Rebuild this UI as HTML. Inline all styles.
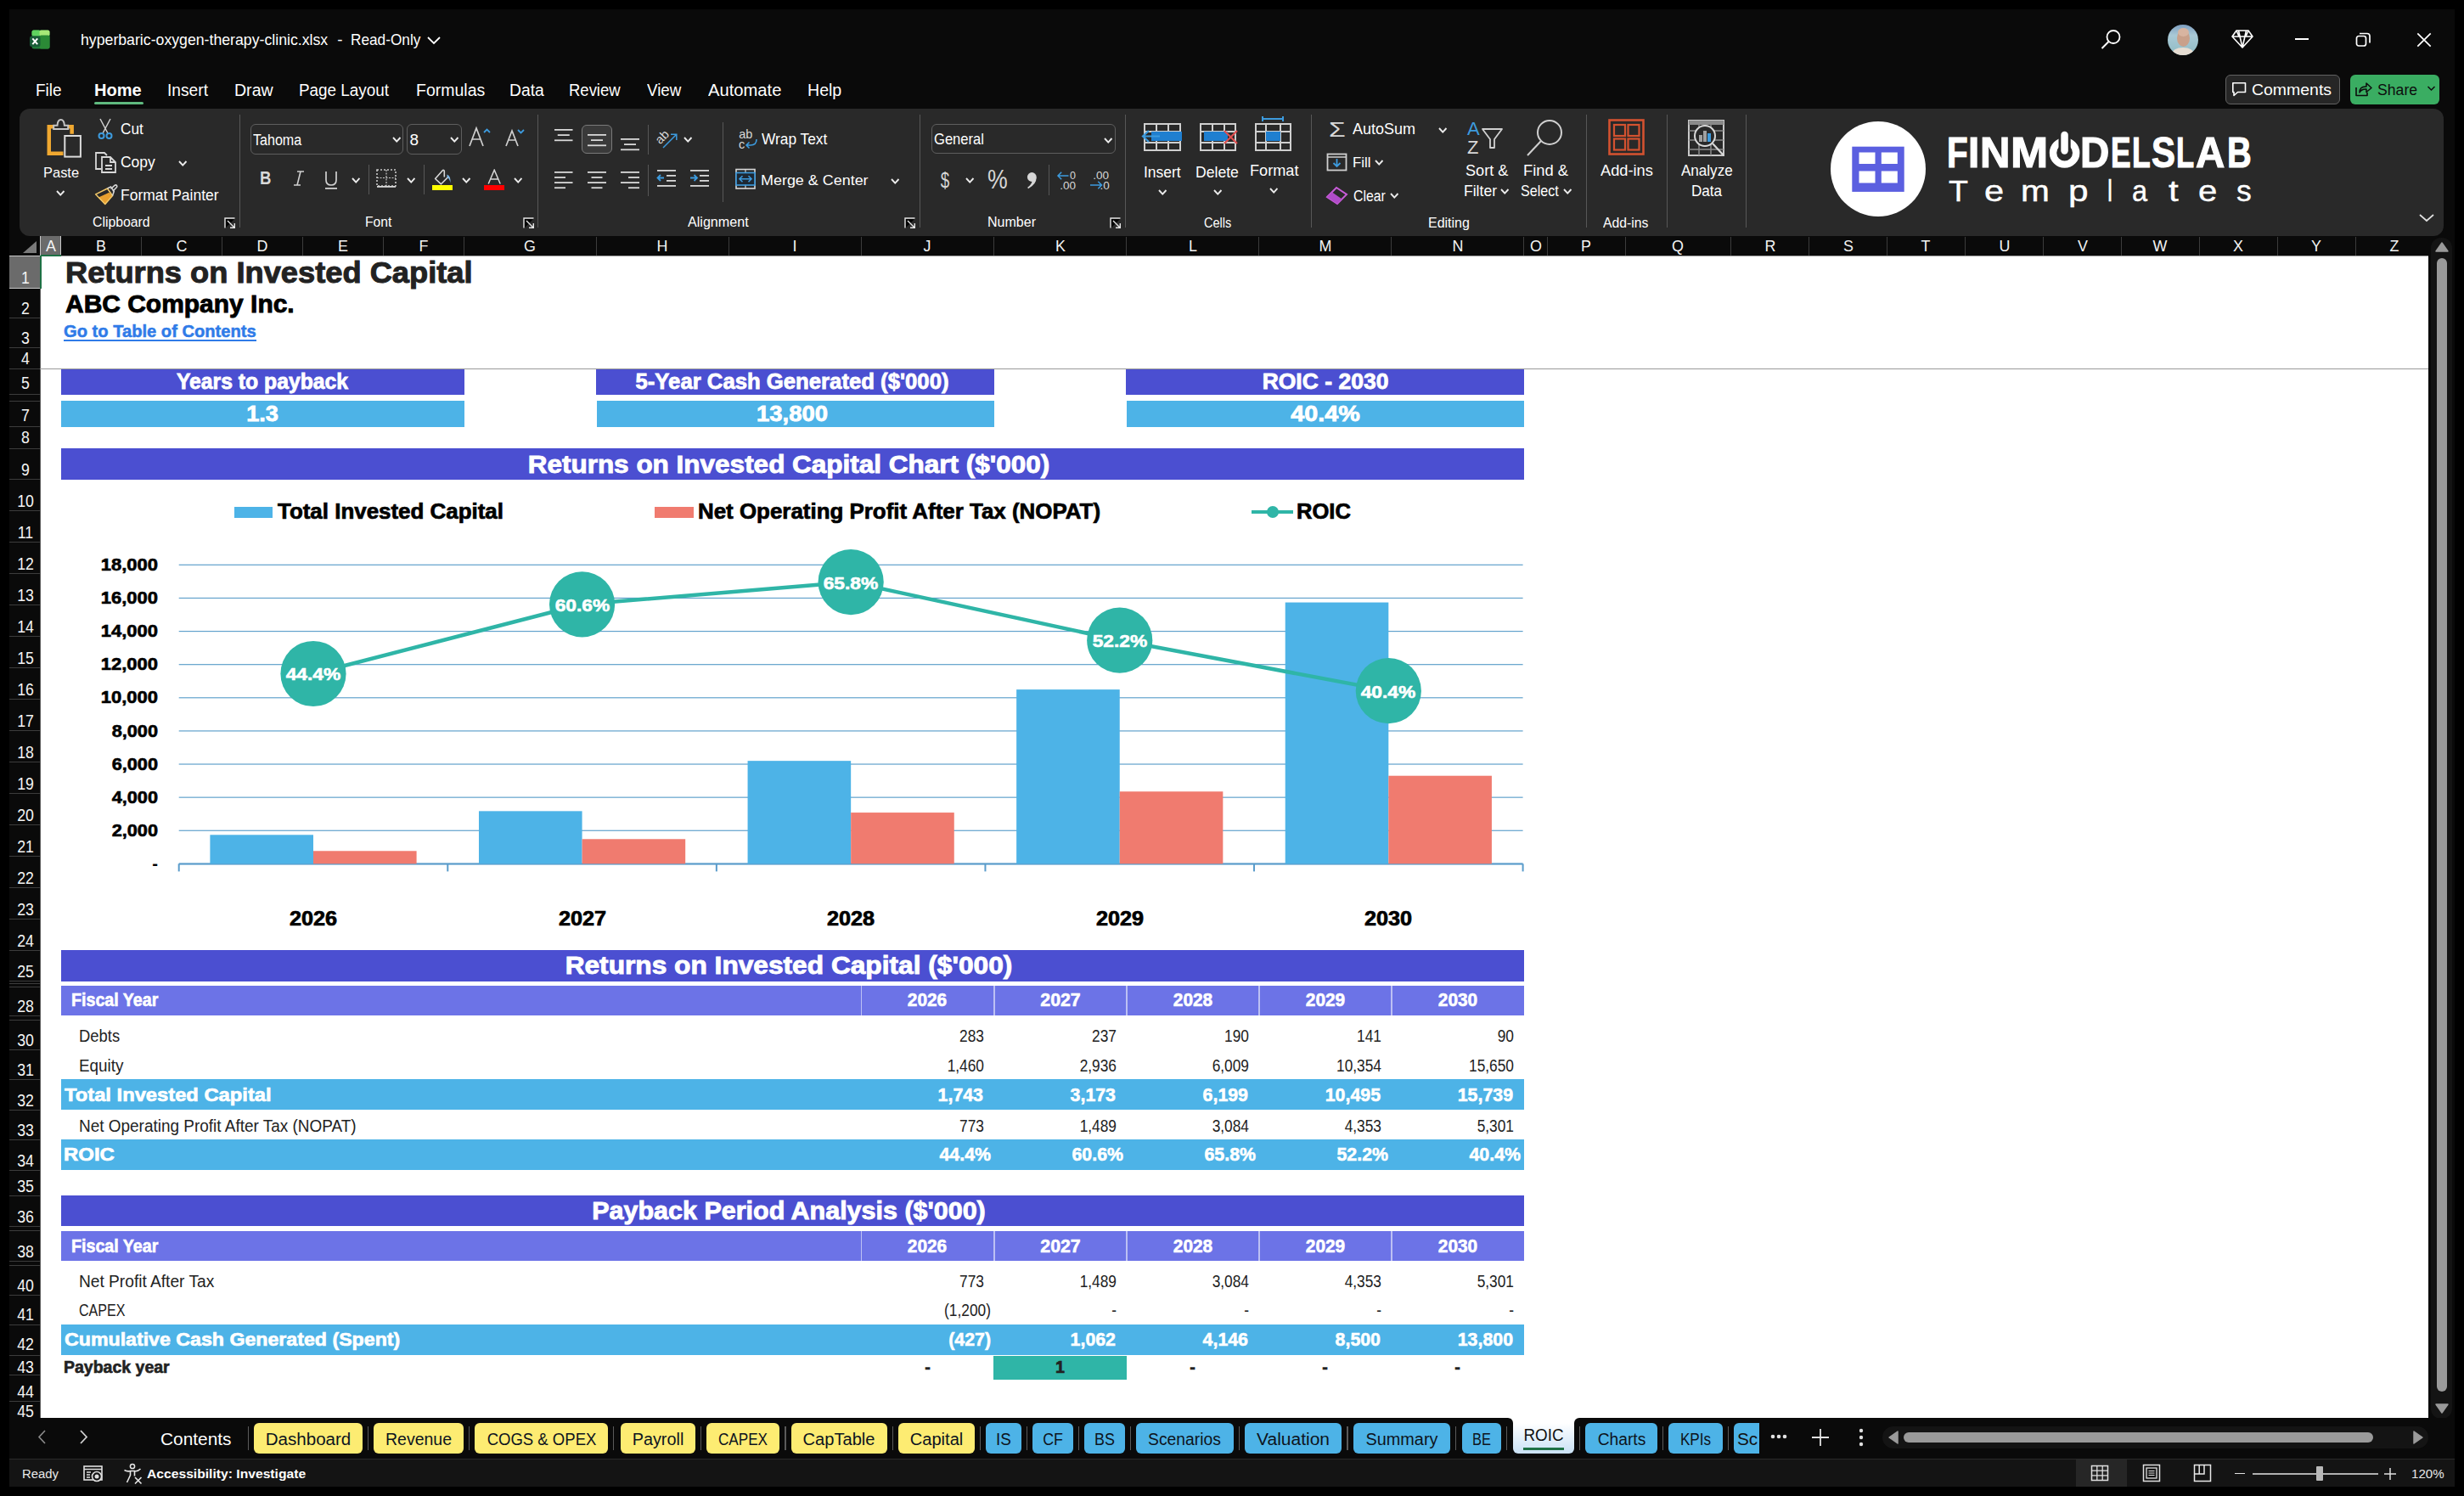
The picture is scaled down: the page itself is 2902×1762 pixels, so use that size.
<!DOCTYPE html><html><head><meta charset="utf-8"><style>
html,body{margin:0;padding:0;width:2902px;height:1762px;overflow:hidden;background:#000;font-family:"Liberation Sans",sans-serif}
</style></head><body>
<div style="position:absolute;left:11px;top:11px;width:2880px;height:1740px;background:#0a0a0a;border-radius:0px;"></div>
<div style="position:absolute;left:47px;top:301px;width:2813px;height:1369px;background:#ffffff;border-radius:0px;"></div>
<div style="position:absolute;left:11px;top:278px;width:2849px;height:23px;background:#0a0a0a;border-radius:0px;"></div>
<svg style="position:absolute;left:22px;top:283px;" width="22" height="16" viewBox="0 0 22 16"><polygon points="21,1 21,15 5,15" fill="#7a7a7a"/></svg>
<div style="position:absolute;left:47.5px;top:278px;width:24.5px;height:23px;background:#6b6b6b;border-radius:0px;"></div>
<div style="position:absolute;left:71.3px;top:279px;width:1.0px;height:22px;background:#3c3c3c;border-radius:0px;"></div>
<div style="position:absolute;left:165.9px;top:279px;width:1.0px;height:22px;background:#3c3c3c;border-radius:0px;"></div>
<div style="position:absolute;left:261.1px;top:279px;width:1.0px;height:22px;background:#3c3c3c;border-radius:0px;"></div>
<div style="position:absolute;left:355.7px;top:279px;width:1.0px;height:22px;background:#3c3c3c;border-radius:0px;"></div>
<div style="position:absolute;left:450.9px;top:279px;width:1.0px;height:22px;background:#3c3c3c;border-radius:0px;"></div>
<div style="position:absolute;left:546.0px;top:279px;width:1.0px;height:22px;background:#3c3c3c;border-radius:0px;"></div>
<div style="position:absolute;left:701.9px;top:279px;width:1.0px;height:22px;background:#3c3c3c;border-radius:0px;"></div>
<div style="position:absolute;left:857.8px;top:279px;width:1.0px;height:22px;background:#3c3c3c;border-radius:0px;"></div>
<div style="position:absolute;left:1013.9px;top:279px;width:1.0px;height:22px;background:#3c3c3c;border-radius:0px;"></div>
<div style="position:absolute;left:1170.0px;top:279px;width:1.0px;height:22px;background:#3c3c3c;border-radius:0px;"></div>
<div style="position:absolute;left:1326.0px;top:279px;width:1.0px;height:22px;background:#3c3c3c;border-radius:0px;"></div>
<div style="position:absolute;left:1482.0px;top:279px;width:1.0px;height:22px;background:#3c3c3c;border-radius:0px;"></div>
<div style="position:absolute;left:1638.1px;top:279px;width:1.0px;height:22px;background:#3c3c3c;border-radius:0px;"></div>
<div style="position:absolute;left:1794.1px;top:279px;width:1.0px;height:22px;background:#3c3c3c;border-radius:0px;"></div>
<div style="position:absolute;left:1821.9px;top:279px;width:1.0px;height:22px;background:#3c3c3c;border-radius:0px;"></div>
<div style="position:absolute;left:1913.7px;top:279px;width:1.0px;height:22px;background:#3c3c3c;border-radius:0px;"></div>
<div style="position:absolute;left:2037.9px;top:279px;width:1.0px;height:22px;background:#3c3c3c;border-radius:0px;"></div>
<div style="position:absolute;left:2130.1px;top:279px;width:1.0px;height:22px;background:#3c3c3c;border-radius:0px;"></div>
<div style="position:absolute;left:2221.9px;top:279px;width:1.0px;height:22px;background:#3c3c3c;border-radius:0px;"></div>
<div style="position:absolute;left:2314.0px;top:279px;width:1.0px;height:22px;background:#3c3c3c;border-radius:0px;"></div>
<div style="position:absolute;left:2406.0px;top:279px;width:1.0px;height:22px;background:#3c3c3c;border-radius:0px;"></div>
<div style="position:absolute;left:2498.1px;top:279px;width:1.0px;height:22px;background:#3c3c3c;border-radius:0px;"></div>
<div style="position:absolute;left:2589.8px;top:279px;width:1.0px;height:22px;background:#3c3c3c;border-radius:0px;"></div>
<div style="position:absolute;left:2681.8px;top:279px;width:1.0px;height:22px;background:#3c3c3c;border-radius:0px;"></div>
<div style="position:absolute;left:2773.9px;top:279px;width:1.0px;height:22px;background:#3c3c3c;border-radius:0px;"></div>
<div style="position:absolute;left:47px;top:300.5px;width:2813px;height:1.0px;background:#9a9a9a;border-radius:0px;"></div>
<div style="position:absolute;left:11px;top:301px;width:36px;height:1369px;background:#0a0a0a;border-radius:0px;"></div>
<div style="position:absolute;left:11px;top:301px;width:36px;height:38.19999999999999px;background:#6b6b6b;border-radius:0px;"></div>
<div style="position:absolute;left:11px;top:338.7px;width:36px;height:1.0px;background:#3c3c3c;border-radius:0px;"></div>
<div style="position:absolute;left:11px;top:374.0px;width:36px;height:1.0px;background:#3c3c3c;border-radius:0px;"></div>
<div style="position:absolute;left:11px;top:409.0px;width:36px;height:1.0px;background:#3c3c3c;border-radius:0px;"></div>
<div style="position:absolute;left:11px;top:433.9px;width:36px;height:1.0px;background:#3c3c3c;border-radius:0px;"></div>
<div style="position:absolute;left:11px;top:464.0px;width:36px;height:1.0px;background:#3c3c3c;border-radius:0px;"></div>
<div style="position:absolute;left:11px;top:471.9px;width:36px;height:1.0px;background:#3c3c3c;border-radius:0px;"></div>
<div style="position:absolute;left:11px;top:502.0px;width:36px;height:1.0px;background:#3c3c3c;border-radius:0px;"></div>
<div style="position:absolute;left:11px;top:528.0px;width:36px;height:1.0px;background:#3c3c3c;border-radius:0px;"></div>
<div style="position:absolute;left:11px;top:563.8px;width:36px;height:1.0px;background:#3c3c3c;border-radius:0px;"></div>
<div style="position:absolute;left:11px;top:600.8px;width:36px;height:1.0px;background:#3c3c3c;border-radius:0px;"></div>
<div style="position:absolute;left:11px;top:637.8px;width:36px;height:1.0px;background:#3c3c3c;border-radius:0px;"></div>
<div style="position:absolute;left:11px;top:674.8px;width:36px;height:1.0px;background:#3c3c3c;border-radius:0px;"></div>
<div style="position:absolute;left:11px;top:711.8px;width:36px;height:1.0px;background:#3c3c3c;border-radius:0px;"></div>
<div style="position:absolute;left:11px;top:748.8px;width:36px;height:1.0px;background:#3c3c3c;border-radius:0px;"></div>
<div style="position:absolute;left:11px;top:785.8px;width:36px;height:1.0px;background:#3c3c3c;border-radius:0px;"></div>
<div style="position:absolute;left:11px;top:822.8px;width:36px;height:1.0px;background:#3c3c3c;border-radius:0px;"></div>
<div style="position:absolute;left:11px;top:859.8px;width:36px;height:1.0px;background:#3c3c3c;border-radius:0px;"></div>
<div style="position:absolute;left:11px;top:896.8px;width:36px;height:1.0px;background:#3c3c3c;border-radius:0px;"></div>
<div style="position:absolute;left:11px;top:933.8px;width:36px;height:1.0px;background:#3c3c3c;border-radius:0px;"></div>
<div style="position:absolute;left:11px;top:970.8px;width:36px;height:1.0px;background:#3c3c3c;border-radius:0px;"></div>
<div style="position:absolute;left:11px;top:1007.8px;width:36px;height:1.0px;background:#3c3c3c;border-radius:0px;"></div>
<div style="position:absolute;left:11px;top:1044.8px;width:36px;height:1.0px;background:#3c3c3c;border-radius:0px;"></div>
<div style="position:absolute;left:11px;top:1081.7px;width:36px;height:1.0px;background:#3c3c3c;border-radius:0px;"></div>
<div style="position:absolute;left:11px;top:1118.6px;width:36px;height:1.0px;background:#3c3c3c;border-radius:0px;"></div>
<div style="position:absolute;left:11px;top:1155.2px;width:36px;height:1.0px;background:#3c3c3c;border-radius:0px;"></div>
<div style="position:absolute;left:11px;top:1157.7px;width:36px;height:1.0px;background:#3c3c3c;border-radius:0px;"></div>
<div style="position:absolute;left:11px;top:1162.0px;width:36px;height:1.0px;background:#3c3c3c;border-radius:0px;"></div>
<div style="position:absolute;left:11px;top:1195.7px;width:36px;height:1.0px;background:#3c3c3c;border-radius:0px;"></div>
<div style="position:absolute;left:11px;top:1200.7px;width:36px;height:1.0px;background:#3c3c3c;border-radius:0px;"></div>
<div style="position:absolute;left:11px;top:1236.2px;width:36px;height:1.0px;background:#3c3c3c;border-radius:0px;"></div>
<div style="position:absolute;left:11px;top:1271.1px;width:36px;height:1.0px;background:#3c3c3c;border-radius:0px;"></div>
<div style="position:absolute;left:11px;top:1307.0px;width:36px;height:1.0px;background:#3c3c3c;border-radius:0px;"></div>
<div style="position:absolute;left:11px;top:1342.1px;width:36px;height:1.0px;background:#3c3c3c;border-radius:0px;"></div>
<div style="position:absolute;left:11px;top:1377.6px;width:36px;height:1.0px;background:#3c3c3c;border-radius:0px;"></div>
<div style="position:absolute;left:11px;top:1408.0px;width:36px;height:1.0px;background:#3c3c3c;border-radius:0px;"></div>
<div style="position:absolute;left:11px;top:1443.7px;width:36px;height:1.0px;background:#3c3c3c;border-radius:0px;"></div>
<div style="position:absolute;left:11px;top:1448.6px;width:36px;height:1.0px;background:#3c3c3c;border-radius:0px;"></div>
<div style="position:absolute;left:11px;top:1485.0px;width:36px;height:1.0px;background:#3c3c3c;border-radius:0px;"></div>
<div style="position:absolute;left:11px;top:1489.7px;width:36px;height:1.0px;background:#3c3c3c;border-radius:0px;"></div>
<div style="position:absolute;left:11px;top:1525.2px;width:36px;height:1.0px;background:#3c3c3c;border-radius:0px;"></div>
<div style="position:absolute;left:11px;top:1559.9px;width:36px;height:1.0px;background:#3c3c3c;border-radius:0px;"></div>
<div style="position:absolute;left:11px;top:1595.6px;width:36px;height:1.0px;background:#3c3c3c;border-radius:0px;"></div>
<div style="position:absolute;left:11px;top:1618.7px;width:36px;height:1.0px;background:#3c3c3c;border-radius:0px;"></div>
<div style="position:absolute;left:11px;top:1649.7px;width:36px;height:1.0px;background:#3c3c3c;border-radius:0px;"></div>
<div style="position:absolute;left:11px;top:1669.9px;width:36px;height:1.0px;background:#3c3c3c;border-radius:0px;"></div>
<div style="position:absolute;left:46.5px;top:301px;width:1.0px;height:1369px;background:#5a5a5a;border-radius:0px;"></div>
<div style="position:absolute;left:11px;top:300.5px;width:36px;height:1.0px;background:#c8c8c8;border-radius:0px;"></div>
<div style="position:absolute;left:11px;top:338.7px;width:36px;height:1.0px;background:#c8c8c8;border-radius:0px;"></div>
<div style="position:absolute;left:47px;top:278px;width:1px;height:23px;background:#c8c8c8;border-radius:0px;"></div>
<div style="position:absolute;left:71.3px;top:278px;width:1.0px;height:23px;background:#c8c8c8;border-radius:0px;"></div>
<div style="position:absolute;left:47px;top:301px;width:2px;height:38.5px;background:#1e7145;border-radius:0px;"></div>
<div style="position:absolute;left:47.5px;top:299.5px;width:24.5px;height:2.0px;background:#1e7145;border-radius:0px;"></div>
<div style="position:absolute;left:47px;top:433.8px;width:2813px;height:1.0px;background:#9a9a9a;border-radius:0px;"></div>
<div style="position:absolute;left:75.2px;top:400px;width:226.5px;height:2px;background:#2f7be8;border-radius:0px;"></div>
<div style="position:absolute;left:71.5px;top:434.8px;width:475.29999999999995px;height:29.80000000000001px;background:#4b4fd1;border-radius:0px;"></div>
<div style="position:absolute;left:72.0px;top:472.3px;width:474.79999999999995px;height:30.30000000000001px;background:#4db3e7;border-radius:0px;"></div>
<div style="position:absolute;left:702.2px;top:434.8px;width:468.79999999999995px;height:29.80000000000001px;background:#4b4fd1;border-radius:0px;"></div>
<div style="position:absolute;left:702.7px;top:472.3px;width:468.29999999999995px;height:30.30000000000001px;background:#4db3e7;border-radius:0px;"></div>
<div style="position:absolute;left:1326.3px;top:434.8px;width:468.70000000000005px;height:29.80000000000001px;background:#4b4fd1;border-radius:0px;"></div>
<div style="position:absolute;left:1326.8px;top:472.3px;width:468.20000000000005px;height:30.30000000000001px;background:#4db3e7;border-radius:0px;"></div>
<div style="position:absolute;left:71.5px;top:528.3px;width:1723.5px;height:36.30000000000007px;background:#4b4fd1;border-radius:0px;"></div>
<svg style="position:absolute;left:0px;top:0px;" width="2902" height="1762" viewBox="0 0 2902 1762"><rect x="210.7" y="977.68" width="1582.8999999999999" height="1.2" fill="#62a2cc"/><rect x="210.7" y="938.56" width="1582.8999999999999" height="1.2" fill="#62a2cc"/><rect x="210.7" y="899.44" width="1582.8999999999999" height="1.2" fill="#62a2cc"/><rect x="210.7" y="860.32" width="1582.8999999999999" height="1.2" fill="#62a2cc"/><rect x="210.7" y="821.20" width="1582.8999999999999" height="1.2" fill="#62a2cc"/><rect x="210.7" y="782.08" width="1582.8999999999999" height="1.2" fill="#62a2cc"/><rect x="210.7" y="742.96" width="1582.8999999999999" height="1.2" fill="#62a2cc"/><rect x="210.7" y="703.84" width="1582.8999999999999" height="1.2" fill="#62a2cc"/><rect x="210.7" y="664.72" width="1582.8999999999999" height="1.2" fill="#62a2cc"/><rect x="210.7" y="1016.4" width="1582.8999999999999" height="2.2" fill="#5a9ccb"/><rect x="209.70" y="1017.4" width="2" height="9" fill="#5a9ccb"/><rect x="526.28" y="1017.4" width="2" height="9" fill="#5a9ccb"/><rect x="842.86" y="1017.4" width="2" height="9" fill="#5a9ccb"/><rect x="1159.44" y="1017.4" width="2" height="9" fill="#5a9ccb"/><rect x="1476.02" y="1017.4" width="2" height="9" fill="#5a9ccb"/><rect x="1792.60" y="1017.4" width="2" height="9" fill="#5a9ccb"/><rect x="247.40" y="983.31" width="121.6" height="34.09" fill="#4db3e7"/><rect x="369.00" y="1002.28" width="121.6" height="15.12" fill="#f07b6f"/><rect x="563.98" y="955.34" width="121.6" height="62.06" fill="#4db3e7"/><rect x="685.58" y="988.28" width="121.6" height="29.12" fill="#f07b6f"/><rect x="880.56" y="896.15" width="121.6" height="121.25" fill="#4db3e7"/><rect x="1002.16" y="957.08" width="121.6" height="60.32" fill="#f07b6f"/><rect x="1197.14" y="812.12" width="121.6" height="205.28" fill="#4db3e7"/><rect x="1318.74" y="932.26" width="121.6" height="85.14" fill="#f07b6f"/><rect x="1513.72" y="709.55" width="121.6" height="307.85" fill="#4db3e7"/><rect x="1635.32" y="913.71" width="121.6" height="103.69" fill="#f07b6f"/><polyline points="368.99,793.49 685.57,711.79 1002.15,685.57 1318.73,754.16 1635.31,813.66" fill="none" stroke="#2fb5a7" stroke-width="4.5" stroke-linejoin="round"/><circle cx="368.99" cy="793.49" r="38.6" fill="#2fb5a7"/><circle cx="685.57" cy="711.79" r="38.6" fill="#2fb5a7"/><circle cx="1002.15" cy="685.57" r="38.6" fill="#2fb5a7"/><circle cx="1318.73" cy="754.16" r="38.6" fill="#2fb5a7"/><circle cx="1635.31" cy="813.66" r="38.6" fill="#2fb5a7"/></svg>
<div style="position:absolute;left:275.7px;top:596.9px;width:45.69999999999999px;height:12.800000000000068px;background:#4db3e7;border-radius:0px;"></div>
<div style="position:absolute;left:771.2px;top:597px;width:46.19999999999993px;height:12.700000000000045px;background:#f07b6f;border-radius:0px;"></div>
<svg style="position:absolute;left:1470px;top:592px;" width="56" height="22" viewBox="0 0 56 22"><rect x="4" y="9" width="49" height="4" fill="#2fb5a7"/><circle cx="29" cy="11" r="7" fill="#2fb5a7"/></svg>
<div style="position:absolute;left:71.5px;top:1118.5px;width:1723.5px;height:37.5px;background:#4b4fd1;border-radius:0px;"></div>
<div style="position:absolute;left:71.5px;top:1161.0px;width:1723.1px;height:34.90000000000009px;background:#6c73e7;border-radius:0px;"></div>
<div style="position:absolute;left:1013.9px;top:1161.0px;width:1.5px;height:34.90000000000009px;background:#ffffff;border-radius:0px;opacity:0.55"></div>
<div style="position:absolute;left:1170.0px;top:1161.0px;width:1.5px;height:34.90000000000009px;background:#ffffff;border-radius:0px;opacity:0.55"></div>
<div style="position:absolute;left:1326.0px;top:1161.0px;width:1.5px;height:34.90000000000009px;background:#ffffff;border-radius:0px;opacity:0.55"></div>
<div style="position:absolute;left:1482.0px;top:1161.0px;width:1.5px;height:34.90000000000009px;background:#ffffff;border-radius:0px;opacity:0.55"></div>
<div style="position:absolute;left:1638.1px;top:1161.0px;width:1.5px;height:34.90000000000009px;background:#ffffff;border-radius:0px;opacity:0.55"></div>
<div style="position:absolute;left:71.5px;top:1271.3px;width:1723.5px;height:36.200000000000045px;background:#4db3e7;border-radius:0px;"></div>
<div style="position:absolute;left:71.5px;top:1342.3px;width:1723.5px;height:35.799999999999955px;background:#4db3e7;border-radius:0px;"></div>
<div style="position:absolute;left:71.5px;top:1407.9px;width:1723.5px;height:36.59999999999991px;background:#4b4fd1;border-radius:0px;"></div>
<div style="position:absolute;left:71.5px;top:1450.2px;width:1723.1px;height:34.5px;background:#6c73e7;border-radius:0px;"></div>
<div style="position:absolute;left:1013.9px;top:1450.2px;width:1.5px;height:34.5px;background:#ffffff;border-radius:0px;opacity:0.55"></div>
<div style="position:absolute;left:1170.0px;top:1450.2px;width:1.5px;height:34.5px;background:#ffffff;border-radius:0px;opacity:0.55"></div>
<div style="position:absolute;left:1326.0px;top:1450.2px;width:1.5px;height:34.5px;background:#ffffff;border-radius:0px;opacity:0.55"></div>
<div style="position:absolute;left:1482.0px;top:1450.2px;width:1.5px;height:34.5px;background:#ffffff;border-radius:0px;opacity:0.55"></div>
<div style="position:absolute;left:1638.1px;top:1450.2px;width:1.5px;height:34.5px;background:#ffffff;border-radius:0px;opacity:0.55"></div>
<div style="position:absolute;left:71.5px;top:1560.1000000000001px;width:1723.5px;height:35.99999999999977px;background:#4db3e7;border-radius:0px;"></div>
<div style="position:absolute;left:1170.0px;top:1597.1px;width:157.0px;height:28.100000000000136px;background:#2fb5a7;border-radius:0px;"></div>
<svg style="position:absolute;left:35px;top:33px;" width="28" height="28" viewBox="0 0 28 28">
<rect x="2.5" y="2.5" width="21" height="22" rx="2.5" fill="#1f7a3a"/>
<rect x="2.5" y="2.5" width="10" height="7" rx="2" fill="#5fd35f"/>
<rect x="11.5" y="2.5" width="12" height="7" rx="2" fill="#a8e878"/>
<rect x="11.5" y="8.5" width="12" height="16" rx="2" fill="#2b8a36"/>
<rect x="0" y="9.5" width="12.5" height="12.5" rx="2.5" fill="#185c37"/>
<path d="M3.3 12.3 L9.2 19.2 M9.2 12.3 L3.3 19.2" stroke="#fff" stroke-width="2"/>
</svg>
<svg style="position:absolute;left:502px;top:42px;" width="18" height="12" viewBox="0 0 18 12"><path d="M2 2 L9 9 L16 2" stroke="#fff" stroke-width="1.8" fill="none"/></svg>
<svg style="position:absolute;left:2472px;top:33px;" width="28" height="28" viewBox="0 0 28 28"><circle cx="17" cy="10.5" r="7.5" stroke="#fff" stroke-width="1.8" fill="none"/><path d="M11.5 16 L3.5 24" stroke="#fff" stroke-width="1.9"/></svg>
<svg style="position:absolute;left:2553px;top:29px;" width="36" height="36" viewBox="0 0 36 36"><defs><clipPath id="avc"><circle cx="18" cy="18" r="18"/></clipPath><linearGradient id="avg" x1="0" y1="0" x2="0" y2="1"><stop offset="0" stop-color="#7f9fc0"/><stop offset="0.35" stop-color="#a9c9d6"/><stop offset="1" stop-color="#8fbcc4"/></linearGradient></defs><g clip-path="url(#avc)"><rect width="36" height="36" fill="url(#avg)"/><ellipse cx="18.5" cy="16" rx="7.5" ry="10" fill="#c9a08a"/><ellipse cx="18.5" cy="9" rx="6.5" ry="5" fill="#d8b4a0"/><path d="M3 38 Q5 27 18 27 Q31 27 33 38Z" fill="#e6ddd2"/></g></svg>
<svg style="position:absolute;left:2627px;top:33px;" width="28" height="26" viewBox="0 0 28 26"><path d="M7 3 H21 L26 10 L14 23 L2 10 Z M2 10 H26 M9.5 3 L14 23 M18.5 3 L14 23 M7 3 L10 10 M21 3 L18 10" stroke="#fff" stroke-width="1.6" fill="none" stroke-linejoin="round"/></svg>
<div style="position:absolute;left:2703px;top:45px;width:16px;height:2px;background:#ffffff;border-radius:0px;"></div>
<svg style="position:absolute;left:2773px;top:37px;" width="22" height="20" viewBox="0 0 22 20"><rect x="2.5" y="5.5" width="11" height="11.5" rx="2.5" stroke="#fff" stroke-width="1.7" fill="none"/><path d="M6 2.5 H15 Q18 2.5 18 5.5 V13.5" stroke="#fff" stroke-width="1.7" fill="none"/></svg>
<svg style="position:absolute;left:2845px;top:37px;" width="20" height="20" viewBox="0 0 20 20"><path d="M2.3 2.3 L17.7 17.7 M17.7 2.3 L2.3 17.7" stroke="#fff" stroke-width="1.7"/></svg>
<div style="position:absolute;left:111.4px;top:120.2px;width:57.5px;height:2.700000000000003px;background:#5fb97f;border-radius:1.5px;"></div>
<div style="position:absolute;left:2621px;top:87.5px;width:135px;height:35.0px;box-sizing:border-box;border:1px solid #626262;border-radius:6px;background:#262626"></div>
<svg style="position:absolute;left:2628px;top:96px;" width="20" height="20" viewBox="0 0 20 20"><path d="M1.8 1.8 H16.5 V12.5 H7.5 L3 16.5 V12.5 H1.8 Z" stroke="#fff" stroke-width="1.6" fill="none" stroke-linejoin="round"/></svg>
<div style="position:absolute;left:2768px;top:87.5px;width:104.69999999999982px;height:35.0px;background:#3aad62;border-radius:6px;"></div>
<svg style="position:absolute;left:2773px;top:95px;" width="22" height="20" viewBox="0 0 22 20"><path d="M2 8 V17.5 H15 V14" stroke="#0d0d0d" stroke-width="1.6" fill="none" stroke-linejoin="round"/><path d="M6 14 Q6 7 13 7 H14 V3 L20 8.5 L14 13.5 V10 H13 Q8 10 6 14 Z" stroke="#0d0d0d" stroke-width="1.5" fill="none" stroke-linejoin="round"/></svg>
<svg style="position:absolute;left:2858px;top:100px;" width="12" height="10" viewBox="0 0 12 10"><path d="M1.5 2 L5.5 6 L9.5 2" stroke="#0d0d0d" stroke-width="1.5" fill="none"/></svg>
<div style="position:absolute;left:23px;top:128px;width:2855px;height:150px;background:#292929;border-radius:12px;"></div>
<svg style="position:absolute;left:53px;top:138px;" width="46" height="50" viewBox="0 0 46 50"><path d="M10 11.35 H4.75 V42.75 H21.5" stroke="#f0a830" stroke-width="4.5" fill="none"/>
<path d="M27.5 11.35 H31.65 V19.8" stroke="#f0a830" stroke-width="4.5" fill="none"/>
<path d="M10.2 14 V9.7 H14.5 Q14.9 3.1 18.7 3.1 Q22.5 3.1 22.9 9.7 H27.2 V14 Z" stroke="#c4c4c4" stroke-width="2" fill="#292929"/>
<rect x="23.3" y="22" width="18.6" height="24.6" stroke="#dcdcdc" stroke-width="2" fill="#292929"/></svg>
<svg style="position:absolute;left:66px;top:223.5px;" width="10.5" height="7.6" viewBox="0 0 10.5 7.6"><path d="M1 1 L5.25 5.6 L9.5 1" stroke="#ececec" stroke-width="1.9" fill="none"/></svg>
<svg style="position:absolute;left:114px;top:139px;" width="20" height="26" viewBox="0 0 20 26"><path d="M4 1 L13 18 M16 1 L7 18" stroke="#d0d0d0" stroke-width="1.5"/><circle cx="5.5" cy="21" r="3" stroke="#3d9bde" stroke-width="2" fill="none"/><circle cx="14.5" cy="21" r="3" stroke="#3d9bde" stroke-width="2" fill="none"/></svg>
<svg style="position:absolute;left:111px;top:178px;" width="27" height="27" viewBox="0 0 27 27"><path d="M12 2 H2 V21 H8" stroke="#d8d8d8" stroke-width="1.8" fill="none"/><path d="M3 2 H12 L15 5" stroke="#d8d8d8" stroke-width="1.8" fill="none"/><path d="M9 7 H19 L25 13 V25 H9 Z M19 7 V13 H25 M13 17 H21 M13 21 H21" stroke="#d8d8d8" stroke-width="1.8" fill="none"/></svg>
<svg style="position:absolute;left:210px;top:188.5px;" width="10.5" height="7.6" viewBox="0 0 10.5 7.6"><path d="M1 1 L5.25 5.6 L9.5 1" stroke="#ececec" stroke-width="1.9" fill="none"/></svg>
<svg style="position:absolute;left:111px;top:216px;" width="28" height="28" viewBox="0 0 28 28"><path d="M5 16.5 L17.5 10.8 L21 14.5 L12.8 24.5 Z" fill="#e8a030"/><path d="M1.6 12.8 L15.5 6 L21.5 14.5 L12.8 24.5 Z" stroke="#f3c868" stroke-width="1.5" fill="none" stroke-linejoin="round"/><path d="M15.5 6 L19.5 4 L23.3 9.3 L21.5 14.5" stroke="#d8d8d8" stroke-width="1.5" fill="none"/><path d="M19.5 6.5 L24 2.4 Q25.5 1.3 26.5 2.6 Q27.3 3.9 26 5 L21.8 9.3" stroke="#d8d8d8" stroke-width="1.6" fill="none"/></svg>
<svg style="position:absolute;left:264px;top:256px;" width="14" height="14" viewBox="0 0 14 14"><path d="M1 1 H12 V12 M1 1 V12 H12" stroke="none" fill="none"/><path d="M1.2 12.8 V1.2 H12.8" stroke="none"/><rect x="1" y="1" width="11.5" height="11.5" fill="none" stroke="none"/><path d="M1 12.5 V1 H12.5 M4 4 L12 12 M7 12.3 H12.3 V7" stroke="#e6e6e6" stroke-width="1.4" fill="none"/></svg>
<div style="position:absolute;left:281.9px;top:135px;width:1.0px;height:133px;background:#575757;border-radius:0px;"></div>
<div style="position:absolute;left:295.3px;top:146.2px;width:180.2px;height:35.5px;box-sizing:border-box;border:1px solid #5e5e5e;border-radius:6px;background:transparent"></div>
<svg style="position:absolute;left:462px;top:161px;" width="10.5" height="7.6" viewBox="0 0 10.5 7.6"><path d="M1 1 L5.25 5.6 L9.5 1" stroke="#ececec" stroke-width="1.9" fill="none"/></svg>
<div style="position:absolute;left:479.4px;top:146.2px;width:64.30000000000007px;height:35.5px;box-sizing:border-box;border:1px solid #5e5e5e;border-radius:6px;background:transparent"></div>
<svg style="position:absolute;left:530px;top:161px;" width="10.5" height="7.6" viewBox="0 0 10.5 7.6"><path d="M1 1 L5.25 5.6 L9.5 1" stroke="#ececec" stroke-width="1.9" fill="none"/></svg>
<svg style="position:absolute;left:551px;top:148px;" width="28" height="26" viewBox="0 0 28 26"><path d="M2 24 L10 3 L18 24 M5 16 H15" stroke="#d0d0d0" stroke-width="1.7" fill="none"/><path d="M19 8 L22.5 4.5 L26 8" stroke="#3d9bde" stroke-width="1.8" fill="none"/></svg>
<svg style="position:absolute;left:594px;top:150px;" width="26" height="24" viewBox="0 0 26 24"><path d="M2 22 L9 4 L16 22 M4.5 15 H13.5" stroke="#d0d0d0" stroke-width="1.7" fill="none"/><path d="M16 3 L19.5 6.5 L23 3" stroke="#3d9bde" stroke-width="1.8" fill="none"/></svg>
<svg style="position:absolute;left:344px;top:200px;" width="16" height="20" viewBox="0 0 16 20"><path d="M6 2 H14 M2 18 H10 M10 2 L6 18" stroke="#d0d0d0" stroke-width="1.6" fill="none"/></svg>
<svg style="position:absolute;left:381px;top:200px;" width="18" height="24" viewBox="0 0 18 24"><path d="M3 2 V12 Q3 18 9 18 Q15 18 15 12 V2" stroke="#d0d0d0" stroke-width="1.7" fill="none"/><rect x="2" y="21" width="14" height="1.8" fill="#d0d0d0"/></svg>
<svg style="position:absolute;left:413.5px;top:209px;" width="10.5" height="7.6" viewBox="0 0 10.5 7.6"><path d="M1 1 L5.25 5.6 L9.5 1" stroke="#ececec" stroke-width="1.9" fill="none"/></svg>
<div style="position:absolute;left:433.9px;top:193.7px;width:1.0px;height:35.80000000000001px;background:#575757;border-radius:0px;"></div>
<svg style="position:absolute;left:442px;top:198px;" width="28" height="26" viewBox="0 0 28 26"><rect x="2" y="2" width="22" height="19" fill="none" stroke="#c8c8c8" stroke-width="1.6" stroke-dasharray="2 2"/><path d="M13 2 V21 M2 11.5 H24" stroke="#c8c8c8" stroke-width="1.2" stroke-dasharray="2 1.5"/><rect x="2" y="21" width="22" height="1.8" fill="#d8d8d8"/></svg>
<svg style="position:absolute;left:478.5px;top:209px;" width="10.5" height="7.6" viewBox="0 0 10.5 7.6"><path d="M1 1 L5.25 5.6 L9.5 1" stroke="#ececec" stroke-width="1.9" fill="none"/></svg>
<div style="position:absolute;left:499.0px;top:193.7px;width:1.0px;height:35.80000000000001px;background:#575757;border-radius:0px;"></div>
<svg style="position:absolute;left:507px;top:198px;" width="30" height="27" viewBox="0 0 30 27"><path d="M16.3 10.4 V3.8 Q16.3 2 14.5 2.5 L5.6 12.5 L12.5 18.8 L21 10.2" stroke="#d8d8d8" stroke-width="1.6" fill="none" stroke-linejoin="round"/><path d="M19.4 7.4 Q24.2 9 23.4 17.5 Q22.5 12 19.6 11 Z" fill="#7fb8e8"/></svg>
<div style="position:absolute;left:508.7px;top:217.8px;width:24.80000000000001px;height:5.799999999999983px;background:#ffff00;border-radius:0px;"></div>
<svg style="position:absolute;left:544px;top:209px;" width="10.5" height="7.6" viewBox="0 0 10.5 7.6"><path d="M1 1 L5.25 5.6 L9.5 1" stroke="#ececec" stroke-width="1.9" fill="none"/></svg>
<svg style="position:absolute;left:573px;top:199px;" width="20" height="20" viewBox="0 0 20 20"><path d="M2.2 17.5 L9.2 1.2 L16.2 17.5 M5 12 H13.4" stroke="#d8d8d8" stroke-width="1.5" fill="none"/></svg>
<div style="position:absolute;left:570px;top:217.8px;width:24px;height:5.799999999999983px;background:#ff0000;border-radius:0px;"></div>
<svg style="position:absolute;left:604.5px;top:209px;" width="10.5" height="7.6" viewBox="0 0 10.5 7.6"><path d="M1 1 L5.25 5.6 L9.5 1" stroke="#ececec" stroke-width="1.9" fill="none"/></svg>
<svg style="position:absolute;left:616px;top:256px;" width="14" height="14" viewBox="0 0 14 14"><path d="M1 1 H12 V12 M1 1 V12 H12" stroke="none" fill="none"/><path d="M1.2 12.8 V1.2 H12.8" stroke="none"/><rect x="1" y="1" width="11.5" height="11.5" fill="none" stroke="none"/><path d="M1 12.5 V1 H12.5 M4 4 L12 12 M7 12.3 H12.3 V7" stroke="#e6e6e6" stroke-width="1.4" fill="none"/></svg>
<div style="position:absolute;left:633.1px;top:135px;width:1.0px;height:133px;background:#575757;border-radius:0px;"></div>
<svg style="position:absolute;left:653px;top:152px;" width="26" height="26" viewBox="0 0 26 26"><rect x="0" y="0.0" width="21.5" height="1.8" fill="#d8d8d8"/><rect x="3.75" y="6.2" width="14" height="1.8" fill="#d8d8d8"/><rect x="0" y="12.4" width="21.5" height="1.8" fill="#d8d8d8"/></svg>
<div style="position:absolute;left:685px;top:146.5px;width:36px;height:34.900000000000006px;box-sizing:border-box;border:1px solid #7a7a7a;border-radius:6px;background:#3a3a3a"></div>
<svg style="position:absolute;left:692px;top:157.5px;" width="26" height="26" viewBox="0 0 26 26"><rect x="0" y="0.0" width="22" height="1.8" fill="#d8d8d8"/><rect x="4" y="6.2" width="14" height="1.8" fill="#d8d8d8"/><rect x="0" y="12.4" width="22" height="1.8" fill="#d8d8d8"/></svg>
<svg style="position:absolute;left:730.8px;top:163px;" width="26" height="26" viewBox="0 0 26 26"><rect x="0" y="0.0" width="22" height="1.8" fill="#d8d8d8"/><rect x="4" y="6.2" width="14" height="1.8" fill="#d8d8d8"/><rect x="0" y="12.4" width="22" height="1.8" fill="#d8d8d8"/></svg>
<div style="position:absolute;left:763.0px;top:146.5px;width:1.0px;height:35.5px;background:#575757;border-radius:0px;"></div>
<svg style="position:absolute;left:770px;top:149px;" width="30" height="28" viewBox="0 0 30 28"><text x="0" y="0" transform="translate(7.5,21.5) rotate(-45)" font-family="Liberation Sans" font-size="14.5" fill="#d8d8d8">ab</text><path d="M11 25 L26 10 M20 9.2 H26.8 V16" stroke="#3d9bde" stroke-width="1.5" fill="none"/></svg>
<svg style="position:absolute;left:805px;top:161px;" width="10.5" height="7.6" viewBox="0 0 10.5 7.6"><path d="M1 1 L5.25 5.6 L9.5 1" stroke="#ececec" stroke-width="1.9" fill="none"/></svg>
<div style="position:absolute;left:851.1px;top:143.7px;width:1.0px;height:94.30000000000001px;background:#575757;border-radius:0px;"></div>
<svg style="position:absolute;left:868px;top:150px;" width="26" height="28" viewBox="0 0 26 28"><text x="2.2" y="13" font-family="Liberation Sans" font-size="14.5" fill="#d8d8d8">ab</text><text x="2" y="25" font-family="Liberation Sans" font-size="14.5" fill="#d8d8d8">c</text><path d="M23 14 Q23 21 16 21 H11 M14.5 17.5 L11 21 L14.5 24.5" stroke="#3d9bde" stroke-width="1.6" fill="none"/></svg>
<svg style="position:absolute;left:653px;top:201.5px;" width="26" height="26" viewBox="0 0 26 26"><rect x="0" y="0.0" width="21.5" height="1.8" fill="#d8d8d8"/><rect x="0" y="6.1" width="13" height="1.8" fill="#d8d8d8"/><rect x="0" y="12.2" width="21.5" height="1.8" fill="#d8d8d8"/><rect x="0" y="18.299999999999997" width="13" height="1.8" fill="#d8d8d8"/></svg>
<svg style="position:absolute;left:692px;top:201.5px;" width="26" height="26" viewBox="0 0 26 26"><rect x="0" y="0.0" width="22" height="1.8" fill="#d8d8d8"/><rect x="4.5" y="6.1" width="13" height="1.8" fill="#d8d8d8"/><rect x="0" y="12.2" width="22" height="1.8" fill="#d8d8d8"/><rect x="4.5" y="18.299999999999997" width="13" height="1.8" fill="#d8d8d8"/></svg>
<svg style="position:absolute;left:730.8px;top:201.5px;" width="26" height="26" viewBox="0 0 26 26"><rect x="0" y="0.0" width="22" height="1.8" fill="#d8d8d8"/><rect x="9" y="6.1" width="13" height="1.8" fill="#d8d8d8"/><rect x="0" y="12.2" width="22" height="1.8" fill="#d8d8d8"/><rect x="9" y="18.299999999999997" width="13" height="1.8" fill="#d8d8d8"/></svg>
<div style="position:absolute;left:763.0px;top:194px;width:1.0px;height:36.5px;background:#575757;border-radius:0px;"></div>
<svg style="position:absolute;left:773px;top:200px;" width="26" height="22" viewBox="0 0 26 22"><rect x="1" y="0" width="22" height="1.8" fill="#d8d8d8"/><rect x="12" y="6" width="11" height="1.8" fill="#d8d8d8"/><rect x="12" y="12" width="11" height="1.8" fill="#d8d8d8"/><rect x="1" y="18" width="22" height="1.8" fill="#d8d8d8"/><path d="M9 9.5 H1.5 M5 6 L1.5 9.5 L5 13" stroke="#3d9bde" stroke-width="1.8" fill="none"/></svg>
<svg style="position:absolute;left:812px;top:200px;" width="26" height="22" viewBox="0 0 26 22"><rect x="1" y="0" width="22" height="1.8" fill="#d8d8d8"/><rect x="12" y="6" width="11" height="1.8" fill="#d8d8d8"/><rect x="12" y="12" width="11" height="1.8" fill="#d8d8d8"/><rect x="1" y="18" width="22" height="1.8" fill="#d8d8d8"/><path d="M1 9.5 H9 M5.5 6 L9 9.5 L5.5 13" stroke="#3d9bde" stroke-width="1.8" fill="none"/></svg>
<svg style="position:absolute;left:865px;top:198px;" width="27" height="26" viewBox="0 0 27 26"><rect x="2" y="1.5" width="22" height="22.5" stroke="#d8d8d8" stroke-width="1.6" fill="none"/><path d="M13 1.5 V6 M13 19.5 V24" stroke="#d8d8d8" stroke-width="1.2"/><rect x="2" y="5.5" width="22" height="14.5" fill="#1d2833" stroke="#3d9bde" stroke-width="1.6"/><path d="M6 12.8 H20 M9.5 9.3 L6 12.8 L9.5 16.3 M16.5 9.3 L20 12.8 L16.5 16.3" stroke="#3d9bde" stroke-width="1.6" fill="none"/></svg>
<svg style="position:absolute;left:1049px;top:209.5px;" width="10.5" height="7.6" viewBox="0 0 10.5 7.6"><path d="M1 1 L5.25 5.6 L9.5 1" stroke="#ececec" stroke-width="1.9" fill="none"/></svg>
<svg style="position:absolute;left:1065px;top:256px;" width="14" height="14" viewBox="0 0 14 14"><path d="M1 1 H12 V12 M1 1 V12 H12" stroke="none" fill="none"/><path d="M1.2 12.8 V1.2 H12.8" stroke="none"/><rect x="1" y="1" width="11.5" height="11.5" fill="none" stroke="none"/><path d="M1 12.5 V1 H12.5 M4 4 L12 12 M7 12.3 H12.3 V7" stroke="#e6e6e6" stroke-width="1.4" fill="none"/></svg>
<div style="position:absolute;left:1082.8px;top:135px;width:1.0px;height:133px;background:#575757;border-radius:0px;"></div>
<div style="position:absolute;left:1096.6px;top:146.4px;width:217.20000000000005px;height:35.099999999999994px;box-sizing:border-box;border:1px solid #5e5e5e;border-radius:6px;background:transparent"></div>
<svg style="position:absolute;left:1300px;top:161.5px;" width="10.5" height="7.6" viewBox="0 0 10.5 7.6"><path d="M1 1 L5.25 5.6 L9.5 1" stroke="#ececec" stroke-width="1.9" fill="none"/></svg>
<svg style="position:absolute;left:1137px;top:209px;" width="10.5" height="7.6" viewBox="0 0 10.5 7.6"><path d="M1 1 L5.25 5.6 L9.5 1" stroke="#ececec" stroke-width="1.9" fill="none"/></svg>
<svg style="position:absolute;left:1206px;top:201px;" width="18" height="23" viewBox="0 0 18 23"><circle cx="9.3" cy="7.5" r="5.4" fill="#d6d6d6"/><path d="M14.6 8 Q14.8 16 5 21.2 L4.2 19.8 Q9 16.5 9.8 11.5 Z" fill="#d6d6d6"/></svg>
<div style="position:absolute;left:1235.0px;top:194px;width:1.0px;height:36px;background:#575757;border-radius:0px;"></div>
<svg style="position:absolute;left:1240px;top:198px;" width="32" height="28" viewBox="0 0 32 28"><path d="M18.5 9 H6 M10.2 4.8 L6 9 L10.2 13.2" stroke="#3d9bde" stroke-width="1.5" fill="none"/><text x="20" y="12.6" font-family="Liberation Sans" font-size="12.5" fill="#d6d6d6">0</text><text x="8.2" y="24.6" font-family="Liberation Sans" font-size="13.5" fill="#d6d6d6">.00</text></svg>
<svg style="position:absolute;left:1280px;top:198px;" width="32" height="28" viewBox="0 0 32 28"><text x="7.2" y="12.6" font-family="Liberation Sans" font-size="13.5" fill="#d6d6d6">.00</text><path d="M4 20 H17.5 M13.3 15.8 L17.5 20 L13.3 24.2" stroke="#3d9bde" stroke-width="1.5" fill="none"/><text x="15.5" y="24.6" font-family="Liberation Sans" font-size="13.5" fill="#d6d6d6">.0</text></svg>
<svg style="position:absolute;left:1307px;top:256px;" width="14" height="14" viewBox="0 0 14 14"><path d="M1 1 H12 V12 M1 1 V12 H12" stroke="none" fill="none"/><path d="M1.2 12.8 V1.2 H12.8" stroke="none"/><rect x="1" y="1" width="11.5" height="11.5" fill="none" stroke="none"/><path d="M1 12.5 V1 H12.5 M4 4 L12 12 M7 12.3 H12.3 V7" stroke="#e6e6e6" stroke-width="1.4" fill="none"/></svg>
<div style="position:absolute;left:1325.0px;top:135px;width:1.0px;height:133px;background:#575757;border-radius:0px;"></div>
<svg style="position:absolute;left:1344px;top:144px;" width="50" height="35" viewBox="0 0 50 35"><rect x="4" y="2" width="42" height="31" stroke="#cfcfcf" stroke-width="2" fill="none"/><path d="M18 2 V33 M32 2 V33 M4 11 H46 M4 24 H46" stroke="#cfcfcf" stroke-width="2"/><rect x="12" y="11" width="36" height="11" fill="#1f7fd0"/><path d="M22 16.5 H2 M9 10 L2 16.5 L9 23" stroke="#3d9bde" stroke-width="2.2" fill="none"/></svg>
<svg style="position:absolute;left:1364px;top:222.5px;" width="10.5" height="7.6" viewBox="0 0 10.5 7.6"><path d="M1 1 L5.25 5.6 L9.5 1" stroke="#ececec" stroke-width="1.9" fill="none"/></svg>
<svg style="position:absolute;left:1412px;top:144px;" width="47" height="35" viewBox="0 0 47 35"><rect x="2" y="2" width="41" height="31" stroke="#cfcfcf" stroke-width="2" fill="none"/><path d="M16 2 V33 M30 2 V33 M2 11 H43 M2 24 H43" stroke="#cfcfcf" stroke-width="2"/><rect x="6" y="11" width="28" height="11" fill="#1f7fd0"/><path d="M30 10 L45 25 M45 10 L30 25" stroke="#e05050" stroke-width="2.2"/></svg>
<svg style="position:absolute;left:1429px;top:222.5px;" width="10.5" height="7.6" viewBox="0 0 10.5 7.6"><path d="M1 1 L5.25 5.6 L9.5 1" stroke="#ececec" stroke-width="1.9" fill="none"/></svg>
<svg style="position:absolute;left:1477px;top:136px;" width="46" height="43" viewBox="0 0 46 43"><path d="M10 4 H34 M10 1 V7 M34 1 V7" stroke="#3d9bde" stroke-width="2"/><rect x="2" y="10" width="41" height="31" stroke="#cfcfcf" stroke-width="2" fill="none"/><path d="M14 10 V41 M31 10 V41 M2 19 H43 M2 32 H43" stroke="#cfcfcf" stroke-width="2"/><rect x="14" y="19" width="17" height="11" fill="#1f7fd0"/></svg>
<svg style="position:absolute;left:1494.5px;top:221px;" width="10.5" height="7.6" viewBox="0 0 10.5 7.6"><path d="M1 1 L5.25 5.6 L9.5 1" stroke="#ececec" stroke-width="1.9" fill="none"/></svg>
<div style="position:absolute;left:1544.1px;top:135px;width:1.0px;height:133px;background:#575757;border-radius:0px;"></div>
<svg style="position:absolute;left:1694px;top:149.5px;" width="10.5" height="7.6" viewBox="0 0 10.5 7.6"><path d="M1 1 L5.25 5.6 L9.5 1" stroke="#ececec" stroke-width="1.9" fill="none"/></svg>
<svg style="position:absolute;left:1562px;top:180px;" width="26" height="23" viewBox="0 0 26 23"><rect x="1.5" y="1.5" width="22" height="19" stroke="#d0d0d0" stroke-width="1.8" fill="none"/><path d="M1.5 5 H23.5" stroke="#d0d0d0" stroke-width="1.5"/><path d="M12.5 7 V16 M8.5 12 L12.5 16 L16.5 12" stroke="#3d9bde" stroke-width="1.8" fill="none"/></svg>
<svg style="position:absolute;left:1619px;top:188px;" width="10.5" height="7.6" viewBox="0 0 10.5 7.6"><path d="M1 1 L5.25 5.6 L9.5 1" stroke="#ececec" stroke-width="1.9" fill="none"/></svg>
<svg style="position:absolute;left:1561px;top:217px;" width="27" height="26" viewBox="0 0 27 26"><path d="M2 15 L13 4 L25 12 L14 23 Z" stroke="#c85cd8" stroke-width="2" fill="none"/><path d="M2 15 L8 9.5 L19.5 17.5 L14 23 Z" fill="#b04cc8"/></svg>
<svg style="position:absolute;left:1637px;top:226.5px;" width="10.5" height="7.6" viewBox="0 0 10.5 7.6"><path d="M1 1 L5.25 5.6 L9.5 1" stroke="#ececec" stroke-width="1.9" fill="none"/></svg>
<svg style="position:absolute;left:1727px;top:140px;" width="48" height="44" viewBox="0 0 48 44"><text x="1" y="19" font-family="Liberation Sans" font-size="22" fill="#3d9bde">A</text><text x="1" y="41" font-family="Liberation Sans" font-size="22" fill="#d8d8d8">Z</text><path d="M19 12 H42 L33 24 V34 H28 V24 Z" stroke="#d0d0d0" stroke-width="1.8" fill="none" stroke-linejoin="round"/></svg>
<svg style="position:absolute;left:1767px;top:222px;" width="10.5" height="7.6" viewBox="0 0 10.5 7.6"><path d="M1 1 L5.25 5.6 L9.5 1" stroke="#ececec" stroke-width="1.9" fill="none"/></svg>
<svg style="position:absolute;left:1796px;top:140px;" width="48" height="46" viewBox="0 0 48 46"><circle cx="29" cy="16" r="14" stroke="#d0d0d0" stroke-width="2" fill="none"/><path d="M19 26 L3 43" stroke="#d0d0d0" stroke-width="2"/></svg>
<svg style="position:absolute;left:1841px;top:222px;" width="10.5" height="7.6" viewBox="0 0 10.5 7.6"><path d="M1 1 L5.25 5.6 L9.5 1" stroke="#ececec" stroke-width="1.9" fill="none"/></svg>
<div style="position:absolute;left:1867.8px;top:135px;width:1.0px;height:133px;background:#575757;border-radius:0px;"></div>
<svg style="position:absolute;left:1893px;top:139px;" width="46" height="46" viewBox="0 0 46 46"><rect x="2.5" y="2.5" width="40" height="40" stroke="#d35230" stroke-width="2.6" fill="none"/><rect x="8" y="8" width="13" height="13" stroke="#d35230" stroke-width="2.2" fill="none"/><rect x="24.5" y="8" width="13" height="13" stroke="#d35230" stroke-width="2.2" fill="none"/><rect x="8" y="24.5" width="13" height="13" stroke="#d35230" stroke-width="2.2" fill="none"/><rect x="24.5" y="24.5" width="13" height="13" stroke="#d35230" stroke-width="2.2" fill="none"/></svg>
<div style="position:absolute;left:1962.9px;top:135px;width:1.0px;height:133px;background:#575757;border-radius:0px;"></div>
<svg style="position:absolute;left:1987px;top:140px;" width="46" height="46" viewBox="0 0 46 46"><rect x="2" y="2" width="41" height="41" stroke="#c8c8c8" stroke-width="2" fill="none"/><rect x="2" y="2" width="41" height="5" fill="#8a8a8a"/><path d="M2 14 H43 M2 25 H43 M2 36 H43 M14 2 V43 M28 2 V43" stroke="#8a8a8a" stroke-width="1.5"/><circle cx="21" cy="20" r="12" stroke="#d8d8d8" stroke-width="2" fill="#292929"/><rect x="14" y="19" width="4" height="8" fill="#a0a0a0"/><rect x="19" y="14" width="4" height="13" fill="#a0a0a0"/><rect x="24" y="17" width="4" height="10" fill="#3d9bde"/><path d="M30 29 L43 43" stroke="#d8d8d8" stroke-width="2.2"/></svg>
<div style="position:absolute;left:2056.1px;top:135px;width:1.0px;height:133px;background:#575757;border-radius:0px;"></div>
<svg style="position:absolute;left:2156.4px;top:143px;" width="112" height="112" viewBox="0 0 112 112"><circle cx="56" cy="56" r="56" fill="#ffffff"/><rect x="25.3" y="29.7" width="61.4" height="53.2" fill="#5b5fe0"/><rect x="33.5" y="36.5" width="19" height="13.5" fill="#fff"/><rect x="59.8" y="36.5" width="19" height="13.5" fill="#fff"/><rect x="33.5" y="58.5" width="19" height="14" fill="#fff"/><rect x="59.8" y="58.5" width="19" height="14" fill="#fff"/></svg>
<svg style="position:absolute;left:2410px;top:150px;" width="44" height="52" viewBox="0 0 44 52"><circle cx="21.6" cy="30" r="13.6" stroke="#fff" stroke-width="8.4" fill="none"/><rect x="14.5" y="2" width="14.2" height="31" fill="#292929"/><rect x="17.3" y="4.7" width="8.5" height="27" rx="4.2" fill="#fff"/></svg>
<svg style="position:absolute;left:2848px;top:250px;" width="20" height="14" viewBox="0 0 20 14"><path d="M2 3 L10 10 L18 3" stroke="#e0e0e0" stroke-width="1.8" fill="none"/></svg>
<div style="position:absolute;left:2860px;top:278px;width:31px;height:1392.4px;background:#0a0a0a;border-radius:0px;"></div>
<div style="position:absolute;left:2863px;top:279.5px;width:25.300000000000182px;height:1391.5px;background:#141414;border-radius:12px;"></div>
<svg style="position:absolute;left:2867px;top:284px;" width="18" height="14" viewBox="0 0 18 14"><path d="M2 12 L9 2 L16 12 Z" fill="#9a9a9a" stroke="#9a9a9a" stroke-width="1.5" stroke-linejoin="round"/></svg>
<div style="position:absolute;left:2870px;top:303.8px;width:12.199999999999818px;height:1335.2px;background:#9a9a9a;border-radius:6px;"></div>
<svg style="position:absolute;left:2867px;top:1652px;" width="18" height="14" viewBox="0 0 18 14"><path d="M2 2 L9 12 L16 2 Z" fill="#9a9a9a" stroke="#9a9a9a" stroke-width="1.5" stroke-linejoin="round"/></svg>
<div style="position:absolute;left:11px;top:1670.4px;width:2880px;height:47.59999999999991px;background:#0a0a0a;border-radius:0px;"></div>
<svg style="position:absolute;left:43px;top:1683px;" width="14" height="20" viewBox="0 0 14 20"><path d="M10 2 L3 9.5 L10 17" stroke="#8c8c8c" stroke-width="1.6" fill="none"/></svg>
<svg style="position:absolute;left:92px;top:1683px;" width="14" height="20" viewBox="0 0 14 20"><path d="M3 2 L10 9.5 L3 17" stroke="#d0d0d0" stroke-width="1.8" fill="none"/></svg>
<div style="position:absolute;left:292px;top:1680px;width:1.1999999999999886px;height:28px;background:#5a5a5a;border-radius:0px;"></div>
<div style="position:absolute;left:298.9px;top:1676px;width:128.10000000000002px;height:35.799999999999955px;background:#fdec72;border-radius:6px;"></div>
<div style="position:absolute;left:433px;top:1680px;width:1.1999999999999886px;height:28px;background:#5a5a5a;border-radius:0px;"></div>
<div style="position:absolute;left:440.3px;top:1676px;width:105.59999999999997px;height:35.799999999999955px;background:#fdec72;border-radius:6px;"></div>
<div style="position:absolute;left:551.9px;top:1680px;width:1.2000000000000455px;height:28px;background:#5a5a5a;border-radius:0px;"></div>
<div style="position:absolute;left:559.3px;top:1676px;width:157.0px;height:35.799999999999955px;background:#fdec72;border-radius:6px;"></div>
<div style="position:absolute;left:722.3px;top:1680px;width:1.2000000000000455px;height:28px;background:#5a5a5a;border-radius:0px;"></div>
<div style="position:absolute;left:730.5px;top:1676px;width:88.10000000000002px;height:35.799999999999955px;background:#fdec72;border-radius:6px;"></div>
<div style="position:absolute;left:824.6px;top:1680px;width:1.2000000000000455px;height:28px;background:#5a5a5a;border-radius:0px;"></div>
<div style="position:absolute;left:832px;top:1676px;width:86.39999999999998px;height:35.799999999999955px;background:#fdec72;border-radius:6px;"></div>
<div style="position:absolute;left:924.4px;top:1680px;width:1.2000000000000455px;height:28px;background:#5a5a5a;border-radius:0px;"></div>
<div style="position:absolute;left:932.2px;top:1676px;width:112.39999999999986px;height:35.799999999999955px;background:#fdec72;border-radius:6px;"></div>
<div style="position:absolute;left:1050.6px;top:1680px;width:1.2000000000000455px;height:28px;background:#5a5a5a;border-radius:0px;"></div>
<div style="position:absolute;left:1058px;top:1676px;width:90px;height:35.799999999999955px;background:#fdec72;border-radius:6px;"></div>
<div style="position:absolute;left:1154px;top:1680px;width:1.2000000000000455px;height:28px;background:#5a5a5a;border-radius:0px;"></div>
<div style="position:absolute;left:1161px;top:1676px;width:42px;height:35.799999999999955px;background:#4db3e7;border-radius:6px;"></div>
<div style="position:absolute;left:1209px;top:1680px;width:1.2000000000000455px;height:28px;background:#5a5a5a;border-radius:0px;"></div>
<div style="position:absolute;left:1216.3px;top:1676px;width:47.5px;height:35.799999999999955px;background:#4db3e7;border-radius:6px;"></div>
<div style="position:absolute;left:1269.8px;top:1680px;width:1.2000000000000455px;height:28px;background:#5a5a5a;border-radius:0px;"></div>
<div style="position:absolute;left:1277.2px;top:1676px;width:47.5px;height:35.799999999999955px;background:#4db3e7;border-radius:6px;"></div>
<div style="position:absolute;left:1330.7px;top:1680px;width:1.2000000000000455px;height:28px;background:#5a5a5a;border-radius:0px;"></div>
<div style="position:absolute;left:1338px;top:1676px;width:114.5px;height:35.799999999999955px;background:#4db3e7;border-radius:6px;"></div>
<div style="position:absolute;left:1458.5px;top:1680px;width:1.2000000000000455px;height:28px;background:#5a5a5a;border-radius:0px;"></div>
<div style="position:absolute;left:1466px;top:1676px;width:114.40000000000009px;height:35.799999999999955px;background:#4db3e7;border-radius:6px;"></div>
<div style="position:absolute;left:1586.4px;top:1680px;width:1.2000000000000455px;height:28px;background:#5a5a5a;border-radius:0px;"></div>
<div style="position:absolute;left:1593.7px;top:1676px;width:114.5px;height:35.799999999999955px;background:#4db3e7;border-radius:6px;"></div>
<div style="position:absolute;left:1714.2px;top:1680px;width:1.2000000000000455px;height:28px;background:#5a5a5a;border-radius:0px;"></div>
<div style="position:absolute;left:1721.6px;top:1676px;width:46.700000000000045px;height:35.799999999999955px;background:#4db3e7;border-radius:6px;"></div>
<div style="position:absolute;left:1774.3px;top:1680px;width:1.2000000000000455px;height:28px;background:#5a5a5a;border-radius:0px;"></div>
<div style="position:absolute;left:1782px;top:1670.4px;width:72.29999999999995px;height:41.399999999999864px;background:linear-gradient(#ffffff 15%,#c9e1f5);border-radius:0 0 6px 6px"></div>
<svg style="position:absolute;left:1776px;top:1670.4px;" width="6" height="6" viewBox="0 0 6 6"><rect width="6" height="6" fill="#ffffff"/><path d="M0 0 A6 6 0 0 1 6 6 L0 6 Z" fill="#0a0a0a"/></svg>
<svg style="position:absolute;left:1854.3px;top:1670.4px;" width="6" height="6" viewBox="0 0 6 6"><rect width="6" height="6" fill="#ffffff"/><path d="M6 0 A6 6 0 0 0 0 6 L6 6 Z" fill="#0a0a0a"/></svg>
<div style="position:absolute;left:1794px;top:1705px;width:48px;height:3px;background:#1e7145;border-radius:0px;"></div>
<div style="position:absolute;left:1860.3px;top:1680px;width:1.2000000000000455px;height:28px;background:#5a5a5a;border-radius:0px;"></div>
<div style="position:absolute;left:1867.3px;top:1676px;width:84.40000000000009px;height:35.799999999999955px;background:#4db3e7;border-radius:6px;"></div>
<div style="position:absolute;left:1957.7px;top:1680px;width:1.2000000000000455px;height:28px;background:#5a5a5a;border-radius:0px;"></div>
<div style="position:absolute;left:1965px;top:1676px;width:64px;height:35.799999999999955px;background:#4db3e7;border-radius:6px;"></div>
<div style="position:absolute;left:2035px;top:1680px;width:1.2000000000000455px;height:28px;background:#5a5a5a;border-radius:0px;"></div>
<div style="position:absolute;left:2041.5px;top:1676px;width:30.5px;height:35.799999999999955px;background:#4db3e7;border-radius:6px;border-radius:6px 0 0 6px"></div>
<svg style="position:absolute;left:2082px;top:1682px;" width="28" height="20" viewBox="0 0 28 20"><circle cx="6" cy="10" r="2.3" fill="#e0e0e0"/><circle cx="13" cy="10" r="2.3" fill="#e0e0e0"/><circle cx="20" cy="10" r="2.3" fill="#e0e0e0"/></svg>
<svg style="position:absolute;left:2132px;top:1681px;" width="24" height="24" viewBox="0 0 24 24"><path d="M12 2 V22 M2 12 H22" stroke="#e0e0e0" stroke-width="1.8"/></svg>
<svg style="position:absolute;left:2185px;top:1680px;" width="14" height="26" viewBox="0 0 14 26"><circle cx="7" cy="5" r="2.2" fill="#e0e0e0"/><circle cx="7" cy="13" r="2.2" fill="#e0e0e0"/><circle cx="7" cy="21" r="2.2" fill="#e0e0e0"/></svg>
<div style="position:absolute;left:2217px;top:1680.4px;width:642.6999999999998px;height:25.59999999999991px;background:#141414;border-radius:13px;"></div>
<svg style="position:absolute;left:2222px;top:1684px;" width="16" height="18" viewBox="0 0 16 18"><path d="M13 2 L3 9 L13 16 Z" fill="#9a9a9a" stroke="#9a9a9a" stroke-width="1.5" stroke-linejoin="round"/></svg>
<div style="position:absolute;left:2241.6px;top:1687px;width:553.0px;height:11.599999999999909px;background:#9a9a9a;border-radius:6px;"></div>
<svg style="position:absolute;left:2840px;top:1684px;" width="16" height="18" viewBox="0 0 16 18"><path d="M3 2 L13 9 L3 16 Z" fill="#9a9a9a" stroke="#9a9a9a" stroke-width="1.5" stroke-linejoin="round"/></svg>
<div style="position:absolute;left:11px;top:1717.5px;width:2880px;height:33.200000000000045px;background:#141414;border-radius:0px;"></div>
<div style="position:absolute;left:11px;top:1717.5px;width:2880px;height:1.2000000000000455px;background:#2a2a2a;border-radius:0px;"></div>
<svg style="position:absolute;left:97px;top:1725px;" width="26" height="22" viewBox="0 0 26 22"><rect x="2" y="2" width="21" height="16" stroke="#e0e0e0" stroke-width="1.6" fill="none"/><path d="M2 5.5 H23 M5 9 H10 M5 12 H9 M5 15 H9" stroke="#e0e0e0" stroke-width="1.4"/><circle cx="17" cy="14" r="5.5" stroke="#e0e0e0" stroke-width="1.6" fill="#141414"/><circle cx="17" cy="14" r="2.5" fill="#e0e0e0"/></svg>
<svg style="position:absolute;left:144px;top:1723px;" width="26" height="26" viewBox="0 0 26 26"><circle cx="12" cy="4" r="2.6" stroke="#e8e8e8" stroke-width="1.5" fill="none"/><path d="M2.5 8.5 Q6 10.5 9.5 9.5 V14.5 L5.5 23 M9.5 9.5 H14.5 Q18 10.5 21.5 7 M14.5 9.5 V15.5" stroke="#e8e8e8" stroke-width="1.6" fill="none" stroke-linejoin="round"/><path d="M15 17 L22.5 24.5 M22.5 17 L15 24.5" stroke="#e8e8e8" stroke-width="1.6"/></svg>
<div style="position:absolute;left:2445px;top:1718.7px;width:59.69999999999982px;height:32.0px;background:#262626;border-radius:0px;"></div>
<svg style="position:absolute;left:2462px;top:1725px;" width="22" height="20" viewBox="0 0 22 20"><rect x="1.5" y="1.5" width="19" height="17" stroke="#e0e0e0" stroke-width="1.5" fill="none"/><path d="M7.8 1.5 V18.5 M14.2 1.5 V18.5 M1.5 7.2 H20.5 M1.5 12.8 H20.5" stroke="#e0e0e0" stroke-width="1.3"/></svg>
<svg style="position:absolute;left:2523px;top:1724px;" width="22" height="22" viewBox="0 0 22 22"><rect x="1.5" y="1.5" width="19" height="19" stroke="#e0e0e0" stroke-width="1.5" fill="none"/><rect x="5" y="5" width="12" height="12" stroke="#e0e0e0" stroke-width="1.3" fill="none"/><path d="M7.5 8.5 H14.5 M7.5 11 H14.5 M7.5 13.5 H14.5" stroke="#e0e0e0" stroke-width="1.1"/></svg>
<svg style="position:absolute;left:2583px;top:1724px;" width="22" height="22" viewBox="0 0 22 22"><path d="M1.5 1.5 H20.5 V20.5 H1.5 Z M1.5 12 H13 V1.5 M7.2 1.5 V12" stroke="#e8e8e8" stroke-width="1.5" fill="none"/></svg>
<div style="position:absolute;left:2632px;top:1734.5px;width:12px;height:1.5px;background:#e0e0e0;border-radius:0px;"></div>
<div style="position:absolute;left:2653px;top:1734.5px;width:147.69999999999982px;height:2.0px;background:#b0b0b0;border-radius:0px;"></div>
<div style="position:absolute;left:2727.5px;top:1726.5px;width:8.5px;height:17.0px;background:#b8b8b8;border-radius:1px;"></div>
<svg style="position:absolute;left:2806px;top:1727px;" width="18" height="18" viewBox="0 0 18 18"><path d="M9 2 V16 M2 9 H16" stroke="#e0e0e0" stroke-width="1.5"/></svg>
<div id="t0" style="position:absolute;top:280.79px;font-family:'Liberation Sans', sans-serif;font-size:18.84px;line-height:1;white-space:nowrap;color:#f4f4f4;font-weight:normal;left:59.55px;transform-origin:0 0;transform:scaleX(0.9500) translateX(-50%);">A</div>
<div id="t1" style="position:absolute;top:280.79px;font-family:'Liberation Sans', sans-serif;font-size:18.84px;line-height:1;white-space:nowrap;color:#f4f4f4;font-weight:normal;left:119.10px;transform-origin:0 0;transform:scaleX(0.9500) translateX(-50%);">B</div>
<div id="t2" style="position:absolute;top:280.79px;font-family:'Liberation Sans', sans-serif;font-size:18.84px;line-height:1;white-space:nowrap;color:#f4f4f4;font-weight:normal;left:214.00px;transform-origin:0 0;transform:scaleX(0.9500) translateX(-50%);">C</div>
<div id="t3" style="position:absolute;top:280.79px;font-family:'Liberation Sans', sans-serif;font-size:18.84px;line-height:1;white-space:nowrap;color:#f4f4f4;font-weight:normal;left:308.90px;transform-origin:0 0;transform:scaleX(0.9500) translateX(-50%);">D</div>
<div id="t4" style="position:absolute;top:280.79px;font-family:'Liberation Sans', sans-serif;font-size:18.84px;line-height:1;white-space:nowrap;color:#f4f4f4;font-weight:normal;left:403.80px;transform-origin:0 0;transform:scaleX(0.9500) translateX(-50%);">E</div>
<div id="t5" style="position:absolute;top:280.79px;font-family:'Liberation Sans', sans-serif;font-size:18.84px;line-height:1;white-space:nowrap;color:#f4f4f4;font-weight:normal;left:498.95px;transform-origin:0 0;transform:scaleX(0.9500) translateX(-50%);">F</div>
<div id="t6" style="position:absolute;top:280.79px;font-family:'Liberation Sans', sans-serif;font-size:18.84px;line-height:1;white-space:nowrap;color:#f4f4f4;font-weight:normal;left:624.45px;transform-origin:0 0;transform:scaleX(0.9500) translateX(-50%);">G</div>
<div id="t7" style="position:absolute;top:280.79px;font-family:'Liberation Sans', sans-serif;font-size:18.84px;line-height:1;white-space:nowrap;color:#f4f4f4;font-weight:normal;left:780.35px;transform-origin:0 0;transform:scaleX(0.9500) translateX(-50%);">H</div>
<div id="t8" style="position:absolute;top:280.79px;font-family:'Liberation Sans', sans-serif;font-size:18.84px;line-height:1;white-space:nowrap;color:#f4f4f4;font-weight:normal;left:936.35px;transform-origin:0 0;transform:scaleX(0.9500) translateX(-50%);">I</div>
<div id="t9" style="position:absolute;top:280.79px;font-family:'Liberation Sans', sans-serif;font-size:18.84px;line-height:1;white-space:nowrap;color:#f4f4f4;font-weight:normal;left:1092.45px;transform-origin:0 0;transform:scaleX(0.9500) translateX(-50%);">J</div>
<div id="t10" style="position:absolute;top:280.79px;font-family:'Liberation Sans', sans-serif;font-size:18.84px;line-height:1;white-space:nowrap;color:#f4f4f4;font-weight:normal;left:1248.50px;transform-origin:0 0;transform:scaleX(0.9500) translateX(-50%);">K</div>
<div id="t11" style="position:absolute;top:280.79px;font-family:'Liberation Sans', sans-serif;font-size:18.84px;line-height:1;white-space:nowrap;color:#f4f4f4;font-weight:normal;left:1404.50px;transform-origin:0 0;transform:scaleX(0.9500) translateX(-50%);">L</div>
<div id="t12" style="position:absolute;top:280.79px;font-family:'Liberation Sans', sans-serif;font-size:18.84px;line-height:1;white-space:nowrap;color:#f4f4f4;font-weight:normal;left:1560.55px;transform-origin:0 0;transform:scaleX(0.9500) translateX(-50%);">M</div>
<div id="t13" style="position:absolute;top:280.79px;font-family:'Liberation Sans', sans-serif;font-size:18.84px;line-height:1;white-space:nowrap;color:#f4f4f4;font-weight:normal;left:1716.60px;transform-origin:0 0;transform:scaleX(0.9500) translateX(-50%);">N</div>
<div id="t14" style="position:absolute;top:280.79px;font-family:'Liberation Sans', sans-serif;font-size:18.84px;line-height:1;white-space:nowrap;color:#f4f4f4;font-weight:normal;left:1808.50px;transform-origin:0 0;transform:scaleX(0.9500) translateX(-50%);">O</div>
<div id="t15" style="position:absolute;top:280.79px;font-family:'Liberation Sans', sans-serif;font-size:18.84px;line-height:1;white-space:nowrap;color:#f4f4f4;font-weight:normal;left:1868.30px;transform-origin:0 0;transform:scaleX(0.9500) translateX(-50%);">P</div>
<div id="t16" style="position:absolute;top:280.79px;font-family:'Liberation Sans', sans-serif;font-size:18.84px;line-height:1;white-space:nowrap;color:#f4f4f4;font-weight:normal;left:1976.30px;transform-origin:0 0;transform:scaleX(0.9500) translateX(-50%);">Q</div>
<div id="t17" style="position:absolute;top:280.79px;font-family:'Liberation Sans', sans-serif;font-size:18.84px;line-height:1;white-space:nowrap;color:#f4f4f4;font-weight:normal;left:2084.50px;transform-origin:0 0;transform:scaleX(0.9500) translateX(-50%);">R</div>
<div id="t18" style="position:absolute;top:280.79px;font-family:'Liberation Sans', sans-serif;font-size:18.84px;line-height:1;white-space:nowrap;color:#f4f4f4;font-weight:normal;left:2176.50px;transform-origin:0 0;transform:scaleX(0.9500) translateX(-50%);">S</div>
<div id="t19" style="position:absolute;top:280.79px;font-family:'Liberation Sans', sans-serif;font-size:18.84px;line-height:1;white-space:nowrap;color:#f4f4f4;font-weight:normal;left:2268.45px;transform-origin:0 0;transform:scaleX(0.9500) translateX(-50%);">T</div>
<div id="t20" style="position:absolute;top:280.79px;font-family:'Liberation Sans', sans-serif;font-size:18.84px;line-height:1;white-space:nowrap;color:#f4f4f4;font-weight:normal;left:2360.50px;transform-origin:0 0;transform:scaleX(0.9500) translateX(-50%);">U</div>
<div id="t21" style="position:absolute;top:280.79px;font-family:'Liberation Sans', sans-serif;font-size:18.84px;line-height:1;white-space:nowrap;color:#f4f4f4;font-weight:normal;left:2452.55px;transform-origin:0 0;transform:scaleX(0.9500) translateX(-50%);">V</div>
<div id="t22" style="position:absolute;top:280.79px;font-family:'Liberation Sans', sans-serif;font-size:18.84px;line-height:1;white-space:nowrap;color:#f4f4f4;font-weight:normal;left:2544.45px;transform-origin:0 0;transform:scaleX(0.9500) translateX(-50%);">W</div>
<div id="t23" style="position:absolute;top:280.79px;font-family:'Liberation Sans', sans-serif;font-size:18.84px;line-height:1;white-space:nowrap;color:#f4f4f4;font-weight:normal;left:2636.30px;transform-origin:0 0;transform:scaleX(0.9500) translateX(-50%);">X</div>
<div id="t24" style="position:absolute;top:280.79px;font-family:'Liberation Sans', sans-serif;font-size:18.84px;line-height:1;white-space:nowrap;color:#f4f4f4;font-weight:normal;left:2728.35px;transform-origin:0 0;transform:scaleX(0.9500) translateX(-50%);">Y</div>
<div id="t25" style="position:absolute;top:280.79px;font-family:'Liberation Sans', sans-serif;font-size:18.84px;line-height:1;white-space:nowrap;color:#f4f4f4;font-weight:normal;left:2820.40px;transform-origin:0 0;transform:scaleX(0.9500) translateX(-50%);">Z</div>
<div id="t26" style="position:absolute;top:318.25px;font-family:'Liberation Sans', sans-serif;font-size:19.71px;line-height:1;white-space:nowrap;color:#f4f4f4;font-weight:normal;left:29.50px;transform-origin:0 0;transform:scaleX(0.9000) translateX(-50%);">1</div>
<div id="t27" style="position:absolute;top:353.75px;font-family:'Liberation Sans', sans-serif;font-size:19.71px;line-height:1;white-space:nowrap;color:#f4f4f4;font-weight:normal;left:29.50px;transform-origin:0 0;transform:scaleX(0.9000) translateX(-50%);">2</div>
<div id="t28" style="position:absolute;top:388.55px;font-family:'Liberation Sans', sans-serif;font-size:19.71px;line-height:1;white-space:nowrap;color:#f4f4f4;font-weight:normal;left:29.50px;transform-origin:0 0;transform:scaleX(0.9000) translateX(-50%);">3</div>
<div id="t29" style="position:absolute;top:413.25px;font-family:'Liberation Sans', sans-serif;font-size:19.71px;line-height:1;white-space:nowrap;color:#f4f4f4;font-weight:normal;left:29.50px;transform-origin:0 0;transform:scaleX(0.9000) translateX(-50%);">4</div>
<div id="t30" style="position:absolute;top:442.05px;font-family:'Liberation Sans', sans-serif;font-size:19.71px;line-height:1;white-space:nowrap;color:#f4f4f4;font-weight:normal;left:29.50px;transform-origin:0 0;transform:scaleX(0.9000) translateX(-50%);">5</div>
<div id="t31" style="position:absolute;top:480.45px;font-family:'Liberation Sans', sans-serif;font-size:19.71px;line-height:1;white-space:nowrap;color:#f4f4f4;font-weight:normal;left:29.50px;transform-origin:0 0;transform:scaleX(0.9000) translateX(-50%);">7</div>
<div id="t32" style="position:absolute;top:505.95px;font-family:'Liberation Sans', sans-serif;font-size:19.71px;line-height:1;white-space:nowrap;color:#f4f4f4;font-weight:normal;left:29.50px;transform-origin:0 0;transform:scaleX(0.9000) translateX(-50%);">8</div>
<div id="t33" style="position:absolute;top:543.75px;font-family:'Liberation Sans', sans-serif;font-size:19.71px;line-height:1;white-space:nowrap;color:#f4f4f4;font-weight:normal;left:29.50px;transform-origin:0 0;transform:scaleX(0.9000) translateX(-50%);">9</div>
<div id="t34" style="position:absolute;top:580.75px;font-family:'Liberation Sans', sans-serif;font-size:19.71px;line-height:1;white-space:nowrap;color:#f4f4f4;font-weight:normal;left:29.50px;transform-origin:0 0;transform:scaleX(0.9000) translateX(-50%);">10</div>
<div id="t35" style="position:absolute;top:617.75px;font-family:'Liberation Sans', sans-serif;font-size:19.71px;line-height:1;white-space:nowrap;color:#f4f4f4;font-weight:normal;left:29.50px;transform-origin:0 0;transform:scaleX(0.9000) translateX(-50%);">11</div>
<div id="t36" style="position:absolute;top:654.75px;font-family:'Liberation Sans', sans-serif;font-size:19.71px;line-height:1;white-space:nowrap;color:#f4f4f4;font-weight:normal;left:29.50px;transform-origin:0 0;transform:scaleX(0.9000) translateX(-50%);">12</div>
<div id="t37" style="position:absolute;top:691.75px;font-family:'Liberation Sans', sans-serif;font-size:19.71px;line-height:1;white-space:nowrap;color:#f4f4f4;font-weight:normal;left:29.50px;transform-origin:0 0;transform:scaleX(0.9000) translateX(-50%);">13</div>
<div id="t38" style="position:absolute;top:728.75px;font-family:'Liberation Sans', sans-serif;font-size:19.71px;line-height:1;white-space:nowrap;color:#f4f4f4;font-weight:normal;left:29.50px;transform-origin:0 0;transform:scaleX(0.9000) translateX(-50%);">14</div>
<div id="t39" style="position:absolute;top:765.75px;font-family:'Liberation Sans', sans-serif;font-size:19.71px;line-height:1;white-space:nowrap;color:#f4f4f4;font-weight:normal;left:29.50px;transform-origin:0 0;transform:scaleX(0.9000) translateX(-50%);">15</div>
<div id="t40" style="position:absolute;top:802.75px;font-family:'Liberation Sans', sans-serif;font-size:19.71px;line-height:1;white-space:nowrap;color:#f4f4f4;font-weight:normal;left:29.50px;transform-origin:0 0;transform:scaleX(0.9000) translateX(-50%);">16</div>
<div id="t41" style="position:absolute;top:839.75px;font-family:'Liberation Sans', sans-serif;font-size:19.71px;line-height:1;white-space:nowrap;color:#f4f4f4;font-weight:normal;left:29.50px;transform-origin:0 0;transform:scaleX(0.9000) translateX(-50%);">17</div>
<div id="t42" style="position:absolute;top:876.75px;font-family:'Liberation Sans', sans-serif;font-size:19.71px;line-height:1;white-space:nowrap;color:#f4f4f4;font-weight:normal;left:29.50px;transform-origin:0 0;transform:scaleX(0.9000) translateX(-50%);">18</div>
<div id="t43" style="position:absolute;top:913.75px;font-family:'Liberation Sans', sans-serif;font-size:19.71px;line-height:1;white-space:nowrap;color:#f4f4f4;font-weight:normal;left:29.50px;transform-origin:0 0;transform:scaleX(0.9000) translateX(-50%);">19</div>
<div id="t44" style="position:absolute;top:950.75px;font-family:'Liberation Sans', sans-serif;font-size:19.71px;line-height:1;white-space:nowrap;color:#f4f4f4;font-weight:normal;left:29.50px;transform-origin:0 0;transform:scaleX(0.9000) translateX(-50%);">20</div>
<div id="t45" style="position:absolute;top:987.75px;font-family:'Liberation Sans', sans-serif;font-size:19.71px;line-height:1;white-space:nowrap;color:#f4f4f4;font-weight:normal;left:29.50px;transform-origin:0 0;transform:scaleX(0.9000) translateX(-50%);">21</div>
<div id="t46" style="position:absolute;top:1024.75px;font-family:'Liberation Sans', sans-serif;font-size:19.71px;line-height:1;white-space:nowrap;color:#f4f4f4;font-weight:normal;left:29.50px;transform-origin:0 0;transform:scaleX(0.9000) translateX(-50%);">22</div>
<div id="t47" style="position:absolute;top:1061.65px;font-family:'Liberation Sans', sans-serif;font-size:19.71px;line-height:1;white-space:nowrap;color:#f4f4f4;font-weight:normal;left:29.50px;transform-origin:0 0;transform:scaleX(0.9000) translateX(-50%);">23</div>
<div id="t48" style="position:absolute;top:1098.55px;font-family:'Liberation Sans', sans-serif;font-size:19.71px;line-height:1;white-space:nowrap;color:#f4f4f4;font-weight:normal;left:29.50px;transform-origin:0 0;transform:scaleX(0.9000) translateX(-50%);">24</div>
<div id="t49" style="position:absolute;top:1135.15px;font-family:'Liberation Sans', sans-serif;font-size:19.71px;line-height:1;white-space:nowrap;color:#f4f4f4;font-weight:normal;left:29.50px;transform-origin:0 0;transform:scaleX(0.9000) translateX(-50%);">25</div>
<div id="t50" style="position:absolute;top:1175.65px;font-family:'Liberation Sans', sans-serif;font-size:19.71px;line-height:1;white-space:nowrap;color:#f4f4f4;font-weight:normal;left:29.50px;transform-origin:0 0;transform:scaleX(0.9000) translateX(-50%);">28</div>
<div id="t51" style="position:absolute;top:1216.15px;font-family:'Liberation Sans', sans-serif;font-size:19.71px;line-height:1;white-space:nowrap;color:#f4f4f4;font-weight:normal;left:29.50px;transform-origin:0 0;transform:scaleX(0.9000) translateX(-50%);">30</div>
<div id="t52" style="position:absolute;top:1251.05px;font-family:'Liberation Sans', sans-serif;font-size:19.71px;line-height:1;white-space:nowrap;color:#f4f4f4;font-weight:normal;left:29.50px;transform-origin:0 0;transform:scaleX(0.9000) translateX(-50%);">31</div>
<div id="t53" style="position:absolute;top:1286.95px;font-family:'Liberation Sans', sans-serif;font-size:19.71px;line-height:1;white-space:nowrap;color:#f4f4f4;font-weight:normal;left:29.50px;transform-origin:0 0;transform:scaleX(0.9000) translateX(-50%);">32</div>
<div id="t54" style="position:absolute;top:1322.05px;font-family:'Liberation Sans', sans-serif;font-size:19.71px;line-height:1;white-space:nowrap;color:#f4f4f4;font-weight:normal;left:29.50px;transform-origin:0 0;transform:scaleX(0.9000) translateX(-50%);">33</div>
<div id="t55" style="position:absolute;top:1357.55px;font-family:'Liberation Sans', sans-serif;font-size:19.71px;line-height:1;white-space:nowrap;color:#f4f4f4;font-weight:normal;left:29.50px;transform-origin:0 0;transform:scaleX(0.9000) translateX(-50%);">34</div>
<div id="t56" style="position:absolute;top:1387.65px;font-family:'Liberation Sans', sans-serif;font-size:19.71px;line-height:1;white-space:nowrap;color:#f4f4f4;font-weight:normal;left:29.50px;transform-origin:0 0;transform:scaleX(0.9000) translateX(-50%);">35</div>
<div id="t57" style="position:absolute;top:1423.65px;font-family:'Liberation Sans', sans-serif;font-size:19.71px;line-height:1;white-space:nowrap;color:#f4f4f4;font-weight:normal;left:29.50px;transform-origin:0 0;transform:scaleX(0.9000) translateX(-50%);">36</div>
<div id="t58" style="position:absolute;top:1464.95px;font-family:'Liberation Sans', sans-serif;font-size:19.71px;line-height:1;white-space:nowrap;color:#f4f4f4;font-weight:normal;left:29.50px;transform-origin:0 0;transform:scaleX(0.9000) translateX(-50%);">38</div>
<div id="t59" style="position:absolute;top:1505.15px;font-family:'Liberation Sans', sans-serif;font-size:19.71px;line-height:1;white-space:nowrap;color:#f4f4f4;font-weight:normal;left:29.50px;transform-origin:0 0;transform:scaleX(0.9000) translateX(-50%);">40</div>
<div id="t60" style="position:absolute;top:1538.85px;font-family:'Liberation Sans', sans-serif;font-size:19.71px;line-height:1;white-space:nowrap;color:#f4f4f4;font-weight:normal;left:29.50px;transform-origin:0 0;transform:scaleX(0.9000) translateX(-50%);">41</div>
<div id="t61" style="position:absolute;top:1573.75px;font-family:'Liberation Sans', sans-serif;font-size:19.71px;line-height:1;white-space:nowrap;color:#f4f4f4;font-weight:normal;left:29.50px;transform-origin:0 0;transform:scaleX(0.9000) translateX(-50%);">42</div>
<div id="t62" style="position:absolute;top:1600.65px;font-family:'Liberation Sans', sans-serif;font-size:19.71px;line-height:1;white-space:nowrap;color:#f4f4f4;font-weight:normal;left:29.50px;transform-origin:0 0;transform:scaleX(0.9000) translateX(-50%);">43</div>
<div id="t63" style="position:absolute;top:1629.95px;font-family:'Liberation Sans', sans-serif;font-size:19.71px;line-height:1;white-space:nowrap;color:#f4f4f4;font-weight:normal;left:29.50px;transform-origin:0 0;transform:scaleX(0.9000) translateX(-50%);">44</div>
<div id="t64" style="position:absolute;top:1652.85px;font-family:'Liberation Sans', sans-serif;font-size:19.71px;line-height:1;white-space:nowrap;color:#f4f4f4;font-weight:normal;left:29.50px;transform-origin:0 0;transform:scaleX(0.9000) translateX(-50%);">45</div>
<div id="t65" style="position:absolute;top:303.50px;font-family:'Liberation Sans', sans-serif;font-size:35.65px;line-height:1;white-space:nowrap;color:#222222;font-weight:bold;-webkit-text-stroke:1.0px #222222;left:77.37px;transform-origin:0 0;transform:scaleX(1.0175);">Returns on Invested Capital</div>
<div id="t66" style="position:absolute;top:342.99px;font-family:'Liberation Sans', sans-serif;font-size:29.42px;line-height:1;white-space:nowrap;color:#000000;font-weight:bold;-webkit-text-stroke:0.9px #000000;left:76.90px;transform-origin:0 0;transform:scaleX(1.0189);">ABC Company Inc.</div>
<div id="t67" style="position:absolute;top:381.22px;font-family:'Liberation Sans', sans-serif;font-size:19.86px;line-height:1;white-space:nowrap;color:#2f7be8;font-weight:bold;-webkit-text-stroke:0.5px #2f7be8;left:75.20px;transform-origin:0 0;transform:scaleX(1.0140);">Go to Table of Contents</div>
<div id="t68" style="position:absolute;top:437.29px;font-family:'Liberation Sans', sans-serif;font-size:25.07px;line-height:1;white-space:nowrap;color:#ffffff;font-weight:bold;-webkit-text-stroke:0.8px #ffffff;left:309.20px;transform-origin:0 0;transform:scaleX(0.9875) translateX(-50%);">Years to payback</div>
<div id="t69" style="position:absolute;top:474.69px;font-family:'Liberation Sans', sans-serif;font-size:25.07px;line-height:1;white-space:nowrap;color:#ffffff;font-weight:bold;-webkit-text-stroke:0.8px #ffffff;left:309.20px;transform-origin:0 0;transform:scaleX(1.0825) translateX(-50%);">1.3</div>
<div id="t70" style="position:absolute;top:437.29px;font-family:'Liberation Sans', sans-serif;font-size:25.07px;line-height:1;white-space:nowrap;color:#ffffff;font-weight:bold;-webkit-text-stroke:0.8px #ffffff;left:932.50px;transform-origin:0 0;transform:scaleX(1.0255) translateX(-50%);">5-Year Cash Generated ($'000)</div>
<div id="t71" style="position:absolute;top:474.69px;font-family:'Liberation Sans', sans-serif;font-size:25.07px;line-height:1;white-space:nowrap;color:#ffffff;font-weight:bold;-webkit-text-stroke:0.8px #ffffff;left:932.50px;transform-origin:0 0;transform:scaleX(1.0948) translateX(-50%);">13,800</div>
<div id="t72" style="position:absolute;top:437.29px;font-family:'Liberation Sans', sans-serif;font-size:25.07px;line-height:1;white-space:nowrap;color:#ffffff;font-weight:bold;-webkit-text-stroke:0.8px #ffffff;left:1560.70px;transform-origin:0 0;transform:scaleX(1.0573) translateX(-50%);">ROIC - 2030</div>
<div id="t73" style="position:absolute;top:474.69px;font-family:'Liberation Sans', sans-serif;font-size:25.07px;line-height:1;white-space:nowrap;color:#ffffff;font-weight:bold;-webkit-text-stroke:0.8px #ffffff;left:1560.70px;transform-origin:0 0;transform:scaleX(1.1444) translateX(-50%);">40.4%</div>
<div id="t74" style="position:absolute;top:533.11px;font-family:'Liberation Sans', sans-serif;font-size:28.70px;line-height:1;white-space:nowrap;color:#ffffff;font-weight:bold;-webkit-text-stroke:0.9px #ffffff;left:928.90px;transform-origin:0 0;transform:scaleX(1.0977) translateX(-50%);">Returns on Invested Capital Chart ($'000)</div>
<div id="t75" style="position:absolute;top:784.44px;font-family:'Liberation Sans', sans-serif;font-size:20.29px;line-height:1;white-space:nowrap;color:#ffffff;font-weight:bold;-webkit-text-stroke:0.6px #ffffff;left:368.99px;transform-origin:0 0;transform:scaleX(1.1229) translateX(-50%);">44.4%</div>
<div id="t76" style="position:absolute;top:702.75px;font-family:'Liberation Sans', sans-serif;font-size:20.29px;line-height:1;white-space:nowrap;color:#ffffff;font-weight:bold;-webkit-text-stroke:0.6px #ffffff;left:685.57px;transform-origin:0 0;transform:scaleX(1.1229) translateX(-50%);">60.6%</div>
<div id="t77" style="position:absolute;top:676.52px;font-family:'Liberation Sans', sans-serif;font-size:20.29px;line-height:1;white-space:nowrap;color:#ffffff;font-weight:bold;-webkit-text-stroke:0.6px #ffffff;left:1002.15px;transform-origin:0 0;transform:scaleX(1.1229) translateX(-50%);">65.8%</div>
<div id="t78" style="position:absolute;top:745.11px;font-family:'Liberation Sans', sans-serif;font-size:20.29px;line-height:1;white-space:nowrap;color:#ffffff;font-weight:bold;-webkit-text-stroke:0.6px #ffffff;left:1318.73px;transform-origin:0 0;transform:scaleX(1.1229) translateX(-50%);">52.2%</div>
<div id="t79" style="position:absolute;top:804.62px;font-family:'Liberation Sans', sans-serif;font-size:20.29px;line-height:1;white-space:nowrap;color:#ffffff;font-weight:bold;-webkit-text-stroke:0.6px #ffffff;left:1635.31px;transform-origin:0 0;transform:scaleX(1.1229) translateX(-50%);">40.4%</div>
<div id="t80" style="position:absolute;top:1006.95px;font-family:'Liberation Sans', sans-serif;font-size:20.29px;line-height:1;white-space:nowrap;color:#000000;font-weight:bold;left:186.00px;transform-origin:0 0;transform:translateX(-100%);">-</div>
<div id="t81" style="position:absolute;top:967.93px;font-family:'Liberation Sans', sans-serif;font-size:20.29px;line-height:1;white-space:nowrap;color:#000000;font-weight:bold;-webkit-text-stroke:0.6px #000000;left:186.30px;transform-origin:0 0;transform:scaleX(1.0705) translateX(-100%);">2,000</div>
<div id="t82" style="position:absolute;top:928.81px;font-family:'Liberation Sans', sans-serif;font-size:20.29px;line-height:1;white-space:nowrap;color:#000000;font-weight:bold;-webkit-text-stroke:0.6px #000000;left:186.30px;transform-origin:0 0;transform:scaleX(1.0705) translateX(-100%);">4,000</div>
<div id="t83" style="position:absolute;top:889.69px;font-family:'Liberation Sans', sans-serif;font-size:20.29px;line-height:1;white-space:nowrap;color:#000000;font-weight:bold;-webkit-text-stroke:0.6px #000000;left:186.30px;transform-origin:0 0;transform:scaleX(1.0705) translateX(-100%);">6,000</div>
<div id="t84" style="position:absolute;top:850.57px;font-family:'Liberation Sans', sans-serif;font-size:20.29px;line-height:1;white-space:nowrap;color:#000000;font-weight:bold;-webkit-text-stroke:0.6px #000000;left:186.30px;transform-origin:0 0;transform:scaleX(1.0705) translateX(-100%);">8,000</div>
<div id="t85" style="position:absolute;top:811.45px;font-family:'Liberation Sans', sans-serif;font-size:20.29px;line-height:1;white-space:nowrap;color:#000000;font-weight:bold;-webkit-text-stroke:0.6px #000000;left:186.30px;transform-origin:0 0;transform:scaleX(1.0838) translateX(-100%);">10,000</div>
<div id="t86" style="position:absolute;top:772.33px;font-family:'Liberation Sans', sans-serif;font-size:20.29px;line-height:1;white-space:nowrap;color:#000000;font-weight:bold;-webkit-text-stroke:0.6px #000000;left:186.30px;transform-origin:0 0;transform:scaleX(1.0838) translateX(-100%);">12,000</div>
<div id="t87" style="position:absolute;top:733.21px;font-family:'Liberation Sans', sans-serif;font-size:20.29px;line-height:1;white-space:nowrap;color:#000000;font-weight:bold;-webkit-text-stroke:0.6px #000000;left:186.30px;transform-origin:0 0;transform:scaleX(1.0838) translateX(-100%);">14,000</div>
<div id="t88" style="position:absolute;top:694.09px;font-family:'Liberation Sans', sans-serif;font-size:20.29px;line-height:1;white-space:nowrap;color:#000000;font-weight:bold;-webkit-text-stroke:0.6px #000000;left:186.30px;transform-origin:0 0;transform:scaleX(1.0838) translateX(-100%);">16,000</div>
<div id="t89" style="position:absolute;top:654.97px;font-family:'Liberation Sans', sans-serif;font-size:20.29px;line-height:1;white-space:nowrap;color:#000000;font-weight:bold;-webkit-text-stroke:0.6px #000000;left:186.30px;transform-origin:0 0;transform:scaleX(1.0838) translateX(-100%);">18,000</div>
<div id="t90" style="position:absolute;top:1071.12px;font-family:'Liberation Sans', sans-serif;font-size:23.62px;line-height:1;white-space:nowrap;color:#000000;font-weight:bold;-webkit-text-stroke:0.7px #000000;left:368.99px;transform-origin:0 0;transform:scaleX(1.0689) translateX(-50%);">2026</div>
<div id="t91" style="position:absolute;top:1071.12px;font-family:'Liberation Sans', sans-serif;font-size:23.62px;line-height:1;white-space:nowrap;color:#000000;font-weight:bold;-webkit-text-stroke:0.7px #000000;left:685.57px;transform-origin:0 0;transform:scaleX(1.0689) translateX(-50%);">2027</div>
<div id="t92" style="position:absolute;top:1071.12px;font-family:'Liberation Sans', sans-serif;font-size:23.62px;line-height:1;white-space:nowrap;color:#000000;font-weight:bold;-webkit-text-stroke:0.7px #000000;left:1002.15px;transform-origin:0 0;transform:scaleX(1.0689) translateX(-50%);">2028</div>
<div id="t93" style="position:absolute;top:1071.12px;font-family:'Liberation Sans', sans-serif;font-size:23.62px;line-height:1;white-space:nowrap;color:#000000;font-weight:bold;-webkit-text-stroke:0.7px #000000;left:1318.73px;transform-origin:0 0;transform:scaleX(1.0689) translateX(-50%);">2029</div>
<div id="t94" style="position:absolute;top:1071.12px;font-family:'Liberation Sans', sans-serif;font-size:23.62px;line-height:1;white-space:nowrap;color:#000000;font-weight:bold;-webkit-text-stroke:0.7px #000000;left:1635.31px;transform-origin:0 0;transform:scaleX(1.0689) translateX(-50%);">2030</div>
<div id="t95" style="position:absolute;top:589.81px;font-family:'Liberation Sans', sans-serif;font-size:24.93px;line-height:1;white-space:nowrap;color:#000000;font-weight:bold;-webkit-text-stroke:0.7px #000000;left:326.90px;transform-origin:0 0;transform:scaleX(1.0399);">Total Invested Capital</div>
<div id="t96" style="position:absolute;top:589.81px;font-family:'Liberation Sans', sans-serif;font-size:24.93px;line-height:1;white-space:nowrap;color:#000000;font-weight:bold;-webkit-text-stroke:0.7px #000000;left:822.46px;transform-origin:0 0;transform:scaleX(1.0395);">Net Operating Profit After Tax (NOPAT)</div>
<div id="t97" style="position:absolute;top:589.81px;font-family:'Liberation Sans', sans-serif;font-size:24.93px;line-height:1;white-space:nowrap;color:#000000;font-weight:bold;-webkit-text-stroke:0.7px #000000;left:1526.77px;transform-origin:0 0;transform:scaleX(1.0265);">ROIC</div>
<div id="t98" style="position:absolute;top:1123.01px;font-family:'Liberation Sans', sans-serif;font-size:28.70px;line-height:1;white-space:nowrap;color:#ffffff;font-weight:bold;-webkit-text-stroke:0.9px #ffffff;left:928.90px;transform-origin:0 0;transform:scaleX(1.1040) translateX(-50%);">Returns on Invested Capital ($'000)</div>
<div id="t99" style="position:absolute;top:1168.37px;font-family:'Liberation Sans', sans-serif;font-size:21.45px;line-height:1;white-space:nowrap;color:#ffffff;font-weight:bold;-webkit-text-stroke:0.6px #ffffff;left:83.58px;transform-origin:0 0;transform:scaleX(0.9168);">Fiscal Year</div>
<div id="t100" style="position:absolute;top:1168.37px;font-family:'Liberation Sans', sans-serif;font-size:21.45px;line-height:1;white-space:nowrap;color:#ffffff;font-weight:bold;-webkit-text-stroke:0.6px #ffffff;left:1092.45px;transform-origin:0 0;transform:scaleX(0.9735) translateX(-50%);">2026</div>
<div id="t101" style="position:absolute;top:1168.37px;font-family:'Liberation Sans', sans-serif;font-size:21.45px;line-height:1;white-space:nowrap;color:#ffffff;font-weight:bold;-webkit-text-stroke:0.6px #ffffff;left:1248.50px;transform-origin:0 0;transform:scaleX(0.9943) translateX(-50%);">2027</div>
<div id="t102" style="position:absolute;top:1168.37px;font-family:'Liberation Sans', sans-serif;font-size:21.45px;line-height:1;white-space:nowrap;color:#ffffff;font-weight:bold;-webkit-text-stroke:0.6px #ffffff;left:1404.50px;transform-origin:0 0;transform:scaleX(0.9735) translateX(-50%);">2028</div>
<div id="t103" style="position:absolute;top:1168.37px;font-family:'Liberation Sans', sans-serif;font-size:21.45px;line-height:1;white-space:nowrap;color:#ffffff;font-weight:bold;-webkit-text-stroke:0.6px #ffffff;left:1560.55px;transform-origin:0 0;transform:scaleX(0.9735) translateX(-50%);">2029</div>
<div id="t104" style="position:absolute;top:1168.37px;font-family:'Liberation Sans', sans-serif;font-size:21.45px;line-height:1;white-space:nowrap;color:#ffffff;font-weight:bold;-webkit-text-stroke:0.6px #ffffff;left:1716.60px;transform-origin:0 0;transform:scaleX(0.9735) translateX(-50%);">2030</div>
<div id="t105" style="position:absolute;top:1210.75px;font-family:'Liberation Sans', sans-serif;font-size:19.71px;line-height:1;white-space:nowrap;color:#222222;font-weight:normal;left:92.56px;transform-origin:0 0;transform:scaleX(0.9350);">Debts</div>
<div id="t106" style="position:absolute;top:1210.75px;font-family:'Liberation Sans', sans-serif;font-size:19.71px;line-height:1;white-space:nowrap;color:#222222;font-weight:normal;left:1159.00px;transform-origin:0 0;transform:scaleX(0.8800) translateX(-100%);">283</div>
<div id="t107" style="position:absolute;top:1210.75px;font-family:'Liberation Sans', sans-serif;font-size:19.71px;line-height:1;white-space:nowrap;color:#222222;font-weight:normal;left:1315.00px;transform-origin:0 0;transform:scaleX(0.8800) translateX(-100%);">237</div>
<div id="t108" style="position:absolute;top:1210.75px;font-family:'Liberation Sans', sans-serif;font-size:19.71px;line-height:1;white-space:nowrap;color:#222222;font-weight:normal;left:1471.00px;transform-origin:0 0;transform:scaleX(0.8800) translateX(-100%);">190</div>
<div id="t109" style="position:absolute;top:1210.75px;font-family:'Liberation Sans', sans-serif;font-size:19.71px;line-height:1;white-space:nowrap;color:#222222;font-weight:normal;left:1627.10px;transform-origin:0 0;transform:scaleX(0.8800) translateX(-100%);">141</div>
<div id="t110" style="position:absolute;top:1210.75px;font-family:'Liberation Sans', sans-serif;font-size:19.71px;line-height:1;white-space:nowrap;color:#222222;font-weight:normal;left:1783.10px;transform-origin:0 0;transform:scaleX(0.8800) translateX(-100%);">90</div>
<div id="t111" style="position:absolute;top:1245.65px;font-family:'Liberation Sans', sans-serif;font-size:19.71px;line-height:1;white-space:nowrap;color:#222222;font-weight:normal;left:92.54px;transform-origin:0 0;transform:scaleX(0.9578);">Equity</div>
<div id="t112" style="position:absolute;top:1245.65px;font-family:'Liberation Sans', sans-serif;font-size:19.71px;line-height:1;white-space:nowrap;color:#222222;font-weight:normal;left:1159.00px;transform-origin:0 0;transform:scaleX(0.8800) translateX(-100%);">1,460</div>
<div id="t113" style="position:absolute;top:1245.65px;font-family:'Liberation Sans', sans-serif;font-size:19.71px;line-height:1;white-space:nowrap;color:#222222;font-weight:normal;left:1315.00px;transform-origin:0 0;transform:scaleX(0.8800) translateX(-100%);">2,936</div>
<div id="t114" style="position:absolute;top:1245.65px;font-family:'Liberation Sans', sans-serif;font-size:19.71px;line-height:1;white-space:nowrap;color:#222222;font-weight:normal;left:1471.00px;transform-origin:0 0;transform:scaleX(0.8800) translateX(-100%);">6,009</div>
<div id="t115" style="position:absolute;top:1245.65px;font-family:'Liberation Sans', sans-serif;font-size:19.71px;line-height:1;white-space:nowrap;color:#222222;font-weight:normal;left:1627.10px;transform-origin:0 0;transform:scaleX(0.8800) translateX(-100%);">10,354</div>
<div id="t116" style="position:absolute;top:1245.65px;font-family:'Liberation Sans', sans-serif;font-size:19.71px;line-height:1;white-space:nowrap;color:#222222;font-weight:normal;left:1783.10px;transform-origin:0 0;transform:scaleX(0.8800) translateX(-100%);">15,650</div>
<div id="t117" style="position:absolute;top:1278.61px;font-family:'Liberation Sans', sans-serif;font-size:22.46px;line-height:1;white-space:nowrap;color:#ffffff;font-weight:bold;-webkit-text-stroke:0.7px #ffffff;left:76.40px;transform-origin:0 0;transform:scaleX(1.0573);">Total Invested Capital</div>
<div id="t118" style="position:absolute;top:1278.61px;font-family:'Liberation Sans', sans-serif;font-size:22.46px;line-height:1;white-space:nowrap;color:#ffffff;font-weight:bold;-webkit-text-stroke:0.6px #ffffff;left:1157.80px;transform-origin:0 0;transform:scaleX(0.9500) translateX(-100%);">1,743</div>
<div id="t119" style="position:absolute;top:1278.61px;font-family:'Liberation Sans', sans-serif;font-size:22.46px;line-height:1;white-space:nowrap;color:#ffffff;font-weight:bold;-webkit-text-stroke:0.6px #ffffff;left:1313.80px;transform-origin:0 0;transform:scaleX(0.9500) translateX(-100%);">3,173</div>
<div id="t120" style="position:absolute;top:1278.61px;font-family:'Liberation Sans', sans-serif;font-size:22.46px;line-height:1;white-space:nowrap;color:#ffffff;font-weight:bold;-webkit-text-stroke:0.6px #ffffff;left:1469.80px;transform-origin:0 0;transform:scaleX(0.9500) translateX(-100%);">6,199</div>
<div id="t121" style="position:absolute;top:1278.61px;font-family:'Liberation Sans', sans-serif;font-size:22.46px;line-height:1;white-space:nowrap;color:#ffffff;font-weight:bold;-webkit-text-stroke:0.6px #ffffff;left:1625.90px;transform-origin:0 0;transform:scaleX(0.9500) translateX(-100%);">10,495</div>
<div id="t122" style="position:absolute;top:1278.61px;font-family:'Liberation Sans', sans-serif;font-size:22.46px;line-height:1;white-space:nowrap;color:#ffffff;font-weight:bold;-webkit-text-stroke:0.6px #ffffff;left:1781.90px;transform-origin:0 0;transform:scaleX(0.9500) translateX(-100%);">15,739</div>
<div id="t123" style="position:absolute;top:1316.65px;font-family:'Liberation Sans', sans-serif;font-size:19.71px;line-height:1;white-space:nowrap;color:#222222;font-weight:normal;left:92.54px;transform-origin:0 0;transform:scaleX(0.9630);">Net Operating Profit After Tax (NOPAT)</div>
<div id="t124" style="position:absolute;top:1316.65px;font-family:'Liberation Sans', sans-serif;font-size:19.71px;line-height:1;white-space:nowrap;color:#222222;font-weight:normal;left:1159.00px;transform-origin:0 0;transform:scaleX(0.8800) translateX(-100%);">773</div>
<div id="t125" style="position:absolute;top:1316.65px;font-family:'Liberation Sans', sans-serif;font-size:19.71px;line-height:1;white-space:nowrap;color:#222222;font-weight:normal;left:1315.00px;transform-origin:0 0;transform:scaleX(0.8800) translateX(-100%);">1,489</div>
<div id="t126" style="position:absolute;top:1316.65px;font-family:'Liberation Sans', sans-serif;font-size:19.71px;line-height:1;white-space:nowrap;color:#222222;font-weight:normal;left:1471.00px;transform-origin:0 0;transform:scaleX(0.8800) translateX(-100%);">3,084</div>
<div id="t127" style="position:absolute;top:1316.65px;font-family:'Liberation Sans', sans-serif;font-size:19.71px;line-height:1;white-space:nowrap;color:#222222;font-weight:normal;left:1627.10px;transform-origin:0 0;transform:scaleX(0.8800) translateX(-100%);">4,353</div>
<div id="t128" style="position:absolute;top:1316.65px;font-family:'Liberation Sans', sans-serif;font-size:19.71px;line-height:1;white-space:nowrap;color:#222222;font-weight:normal;left:1783.10px;transform-origin:0 0;transform:scaleX(0.8800) translateX(-100%);">5,301</div>
<div id="t129" style="position:absolute;top:1349.21px;font-family:'Liberation Sans', sans-serif;font-size:22.46px;line-height:1;white-space:nowrap;color:#ffffff;font-weight:bold;-webkit-text-stroke:0.7px #ffffff;left:75.33px;transform-origin:0 0;transform:scaleX(1.0652);">ROIC</div>
<div id="t130" style="position:absolute;top:1349.21px;font-family:'Liberation Sans', sans-serif;font-size:22.46px;line-height:1;white-space:nowrap;color:#ffffff;font-weight:bold;-webkit-text-stroke:0.6px #ffffff;left:1166.70px;transform-origin:0 0;transform:scaleX(0.9500) translateX(-100%);">44.4%</div>
<div id="t131" style="position:absolute;top:1349.21px;font-family:'Liberation Sans', sans-serif;font-size:22.46px;line-height:1;white-space:nowrap;color:#ffffff;font-weight:bold;-webkit-text-stroke:0.6px #ffffff;left:1322.70px;transform-origin:0 0;transform:scaleX(0.9500) translateX(-100%);">60.6%</div>
<div id="t132" style="position:absolute;top:1349.21px;font-family:'Liberation Sans', sans-serif;font-size:22.46px;line-height:1;white-space:nowrap;color:#ffffff;font-weight:bold;-webkit-text-stroke:0.6px #ffffff;left:1478.70px;transform-origin:0 0;transform:scaleX(0.9500) translateX(-100%);">65.8%</div>
<div id="t133" style="position:absolute;top:1349.21px;font-family:'Liberation Sans', sans-serif;font-size:22.46px;line-height:1;white-space:nowrap;color:#ffffff;font-weight:bold;-webkit-text-stroke:0.6px #ffffff;left:1634.80px;transform-origin:0 0;transform:scaleX(0.9500) translateX(-100%);">52.2%</div>
<div id="t134" style="position:absolute;top:1349.21px;font-family:'Liberation Sans', sans-serif;font-size:22.46px;line-height:1;white-space:nowrap;color:#ffffff;font-weight:bold;-webkit-text-stroke:0.6px #ffffff;left:1790.80px;transform-origin:0 0;transform:scaleX(0.9500) translateX(-100%);">40.4%</div>
<div id="t135" style="position:absolute;top:1411.51px;font-family:'Liberation Sans', sans-serif;font-size:28.70px;line-height:1;white-space:nowrap;color:#ffffff;font-weight:bold;-webkit-text-stroke:0.9px #ffffff;left:928.90px;transform-origin:0 0;transform:scaleX(1.0624) translateX(-50%);">Payback Period Analysis ($'000)</div>
<div id="t136" style="position:absolute;top:1457.67px;font-family:'Liberation Sans', sans-serif;font-size:21.45px;line-height:1;white-space:nowrap;color:#ffffff;font-weight:bold;-webkit-text-stroke:0.6px #ffffff;left:83.58px;transform-origin:0 0;transform:scaleX(0.9168);">Fiscal Year</div>
<div id="t137" style="position:absolute;top:1457.67px;font-family:'Liberation Sans', sans-serif;font-size:21.45px;line-height:1;white-space:nowrap;color:#ffffff;font-weight:bold;-webkit-text-stroke:0.6px #ffffff;left:1092.45px;transform-origin:0 0;transform:scaleX(0.9735) translateX(-50%);">2026</div>
<div id="t138" style="position:absolute;top:1457.67px;font-family:'Liberation Sans', sans-serif;font-size:21.45px;line-height:1;white-space:nowrap;color:#ffffff;font-weight:bold;-webkit-text-stroke:0.6px #ffffff;left:1248.50px;transform-origin:0 0;transform:scaleX(0.9943) translateX(-50%);">2027</div>
<div id="t139" style="position:absolute;top:1457.67px;font-family:'Liberation Sans', sans-serif;font-size:21.45px;line-height:1;white-space:nowrap;color:#ffffff;font-weight:bold;-webkit-text-stroke:0.6px #ffffff;left:1404.50px;transform-origin:0 0;transform:scaleX(0.9735) translateX(-50%);">2028</div>
<div id="t140" style="position:absolute;top:1457.67px;font-family:'Liberation Sans', sans-serif;font-size:21.45px;line-height:1;white-space:nowrap;color:#ffffff;font-weight:bold;-webkit-text-stroke:0.6px #ffffff;left:1560.55px;transform-origin:0 0;transform:scaleX(0.9735) translateX(-50%);">2029</div>
<div id="t141" style="position:absolute;top:1457.67px;font-family:'Liberation Sans', sans-serif;font-size:21.45px;line-height:1;white-space:nowrap;color:#ffffff;font-weight:bold;-webkit-text-stroke:0.6px #ffffff;left:1716.60px;transform-origin:0 0;transform:scaleX(0.9735) translateX(-50%);">2030</div>
<div id="t142" style="position:absolute;top:1499.75px;font-family:'Liberation Sans', sans-serif;font-size:19.71px;line-height:1;white-space:nowrap;color:#222222;font-weight:normal;left:92.53px;transform-origin:0 0;transform:scaleX(0.9722);">Net Profit After Tax</div>
<div id="t143" style="position:absolute;top:1499.75px;font-family:'Liberation Sans', sans-serif;font-size:19.71px;line-height:1;white-space:nowrap;color:#222222;font-weight:normal;left:1159.00px;transform-origin:0 0;transform:scaleX(0.8800) translateX(-100%);">773</div>
<div id="t144" style="position:absolute;top:1499.75px;font-family:'Liberation Sans', sans-serif;font-size:19.71px;line-height:1;white-space:nowrap;color:#222222;font-weight:normal;left:1315.00px;transform-origin:0 0;transform:scaleX(0.8800) translateX(-100%);">1,489</div>
<div id="t145" style="position:absolute;top:1499.75px;font-family:'Liberation Sans', sans-serif;font-size:19.71px;line-height:1;white-space:nowrap;color:#222222;font-weight:normal;left:1471.00px;transform-origin:0 0;transform:scaleX(0.8800) translateX(-100%);">3,084</div>
<div id="t146" style="position:absolute;top:1499.75px;font-family:'Liberation Sans', sans-serif;font-size:19.71px;line-height:1;white-space:nowrap;color:#222222;font-weight:normal;left:1627.10px;transform-origin:0 0;transform:scaleX(0.8800) translateX(-100%);">4,353</div>
<div id="t147" style="position:absolute;top:1499.75px;font-family:'Liberation Sans', sans-serif;font-size:19.71px;line-height:1;white-space:nowrap;color:#222222;font-weight:normal;left:1783.10px;transform-origin:0 0;transform:scaleX(0.8800) translateX(-100%);">5,301</div>
<div id="t148" style="position:absolute;top:1534.45px;font-family:'Liberation Sans', sans-serif;font-size:19.71px;line-height:1;white-space:nowrap;color:#222222;font-weight:normal;left:92.68px;transform-origin:0 0;transform:scaleX(0.8154);">CAPEX</div>
<div id="t149" style="position:absolute;top:1534.45px;font-family:'Liberation Sans', sans-serif;font-size:19.71px;line-height:1;white-space:nowrap;color:#222222;font-weight:normal;left:1166.70px;transform-origin:0 0;transform:scaleX(0.8800) translateX(-100%);">(1,200)</div>
<div id="t150" style="position:absolute;top:1534.45px;font-family:'Liberation Sans', sans-serif;font-size:19.71px;line-height:1;white-space:nowrap;color:#222222;font-weight:normal;left:1315.00px;transform-origin:0 0;transform:scaleX(0.8800) translateX(-100%);">-</div>
<div id="t151" style="position:absolute;top:1534.45px;font-family:'Liberation Sans', sans-serif;font-size:19.71px;line-height:1;white-space:nowrap;color:#222222;font-weight:normal;left:1471.00px;transform-origin:0 0;transform:scaleX(0.8800) translateX(-100%);">-</div>
<div id="t152" style="position:absolute;top:1534.45px;font-family:'Liberation Sans', sans-serif;font-size:19.71px;line-height:1;white-space:nowrap;color:#222222;font-weight:normal;left:1627.10px;transform-origin:0 0;transform:scaleX(0.8800) translateX(-100%);">-</div>
<div id="t153" style="position:absolute;top:1534.45px;font-family:'Liberation Sans', sans-serif;font-size:19.71px;line-height:1;white-space:nowrap;color:#222222;font-weight:normal;left:1783.10px;transform-origin:0 0;transform:scaleX(0.8800) translateX(-100%);">-</div>
<div id="t154" style="position:absolute;top:1567.21px;font-family:'Liberation Sans', sans-serif;font-size:22.46px;line-height:1;white-space:nowrap;color:#ffffff;font-weight:bold;-webkit-text-stroke:0.7px #ffffff;left:76.40px;transform-origin:0 0;transform:scaleX(1.0318);">Cumulative Cash Generated (Spent)</div>
<div id="t155" style="position:absolute;top:1567.21px;font-family:'Liberation Sans', sans-serif;font-size:22.46px;line-height:1;white-space:nowrap;color:#ffffff;font-weight:bold;-webkit-text-stroke:0.6px #ffffff;left:1166.70px;transform-origin:0 0;transform:scaleX(0.9500) translateX(-100%);">(427)</div>
<div id="t156" style="position:absolute;top:1567.21px;font-family:'Liberation Sans', sans-serif;font-size:22.46px;line-height:1;white-space:nowrap;color:#ffffff;font-weight:bold;-webkit-text-stroke:0.6px #ffffff;left:1313.80px;transform-origin:0 0;transform:scaleX(0.9500) translateX(-100%);">1,062</div>
<div id="t157" style="position:absolute;top:1567.21px;font-family:'Liberation Sans', sans-serif;font-size:22.46px;line-height:1;white-space:nowrap;color:#ffffff;font-weight:bold;-webkit-text-stroke:0.6px #ffffff;left:1469.80px;transform-origin:0 0;transform:scaleX(0.9500) translateX(-100%);">4,146</div>
<div id="t158" style="position:absolute;top:1567.21px;font-family:'Liberation Sans', sans-serif;font-size:22.46px;line-height:1;white-space:nowrap;color:#ffffff;font-weight:bold;-webkit-text-stroke:0.6px #ffffff;left:1625.90px;transform-origin:0 0;transform:scaleX(0.9500) translateX(-100%);">8,500</div>
<div id="t159" style="position:absolute;top:1567.21px;font-family:'Liberation Sans', sans-serif;font-size:22.46px;line-height:1;white-space:nowrap;color:#ffffff;font-weight:bold;-webkit-text-stroke:0.6px #ffffff;left:1781.90px;transform-origin:0 0;transform:scaleX(0.9500) translateX(-100%);">13,800</div>
<div id="t160" style="position:absolute;top:1600.85px;font-family:'Liberation Sans', sans-serif;font-size:19.71px;line-height:1;white-space:nowrap;color:#222222;font-weight:bold;-webkit-text-stroke:0.6px #222222;left:74.61px;transform-origin:0 0;transform:scaleX(0.9902);">Payback year</div>
<div id="t161" style="position:absolute;top:1600.85px;font-family:'Liberation Sans', sans-serif;font-size:19.71px;line-height:1;white-space:nowrap;color:#222222;font-weight:bold;-webkit-text-stroke:0.6px #222222;left:1092.45px;transform-origin:0 0;transform:translateX(-50%);">-</div>
<div id="t162" style="position:absolute;top:1600.85px;font-family:'Liberation Sans', sans-serif;font-size:19.71px;line-height:1;white-space:nowrap;color:#222222;font-weight:bold;-webkit-text-stroke:0.6px #222222;left:1248.50px;transform-origin:0 0;transform:translateX(-50%);">1</div>
<div id="t163" style="position:absolute;top:1600.85px;font-family:'Liberation Sans', sans-serif;font-size:19.71px;line-height:1;white-space:nowrap;color:#222222;font-weight:bold;-webkit-text-stroke:0.6px #222222;left:1404.50px;transform-origin:0 0;transform:translateX(-50%);">-</div>
<div id="t164" style="position:absolute;top:1600.85px;font-family:'Liberation Sans', sans-serif;font-size:19.71px;line-height:1;white-space:nowrap;color:#222222;font-weight:bold;-webkit-text-stroke:0.6px #222222;left:1560.55px;transform-origin:0 0;transform:translateX(-50%);">-</div>
<div id="t165" style="position:absolute;top:1600.85px;font-family:'Liberation Sans', sans-serif;font-size:19.71px;line-height:1;white-space:nowrap;color:#222222;font-weight:bold;-webkit-text-stroke:0.6px #222222;left:1716.60px;transform-origin:0 0;transform:translateX(-50%);">-</div>
<div id="t166" style="position:absolute;top:38.19px;font-family:'Liberation Sans', sans-serif;font-size:18.84px;line-height:1;white-space:nowrap;color:#ffffff;font-weight:normal;left:94.96px;transform-origin:0 0;transform:scaleX(0.9401);">hyperbaric-oxygen-therapy-clinic.xlsx</div>
<div id="t167" style="position:absolute;top:38.19px;font-family:'Liberation Sans', sans-serif;font-size:18.84px;line-height:1;white-space:nowrap;color:#ffffff;font-weight:normal;left:397.30px;transform-origin:0 0;">-</div>
<div id="t168" style="position:absolute;top:38.19px;font-family:'Liberation Sans', sans-serif;font-size:18.84px;line-height:1;white-space:nowrap;color:#ffffff;font-weight:normal;left:413.08px;transform-origin:0 0;transform:scaleX(0.9154);">Read-Only</div>
<div id="t169" style="position:absolute;top:97.15px;font-family:'Liberation Sans', sans-serif;font-size:19.71px;line-height:1;white-space:nowrap;color:#ffffff;font-weight:normal;left:41.64px;transform-origin:0 0;transform:scaleX(0.9619);">File</div>
<div id="t170" style="position:absolute;top:97.15px;font-family:'Liberation Sans', sans-serif;font-size:19.71px;line-height:1;white-space:nowrap;color:#ffffff;font-weight:600;left:110.58px;transform-origin:0 0;transform:scaleX(1.0196);">Home</div>
<div id="t171" style="position:absolute;top:97.15px;font-family:'Liberation Sans', sans-serif;font-size:19.71px;line-height:1;white-space:nowrap;color:#ffffff;font-weight:normal;left:197.03px;transform-origin:0 0;transform:scaleX(0.9740);">Insert</div>
<div id="t172" style="position:absolute;top:97.15px;font-family:'Liberation Sans', sans-serif;font-size:19.71px;line-height:1;white-space:nowrap;color:#ffffff;font-weight:normal;left:276.21px;transform-origin:0 0;transform:scaleX(0.9929);">Draw</div>
<div id="t173" style="position:absolute;top:97.15px;font-family:'Liberation Sans', sans-serif;font-size:19.71px;line-height:1;white-space:nowrap;color:#ffffff;font-weight:normal;left:352.04px;transform-origin:0 0;transform:scaleX(0.9592);">Page Layout</div>
<div id="t174" style="position:absolute;top:97.15px;font-family:'Liberation Sans', sans-serif;font-size:19.71px;line-height:1;white-space:nowrap;color:#ffffff;font-weight:normal;left:490.01px;transform-origin:0 0;transform:scaleX(0.9901);">Formulas</div>
<div id="t175" style="position:absolute;top:97.15px;font-family:'Liberation Sans', sans-serif;font-size:19.71px;line-height:1;white-space:nowrap;color:#ffffff;font-weight:normal;left:599.62px;transform-origin:0 0;transform:scaleX(0.9794);">Data</div>
<div id="t176" style="position:absolute;top:97.15px;font-family:'Liberation Sans', sans-serif;font-size:19.71px;line-height:1;white-space:nowrap;color:#ffffff;font-weight:normal;left:669.96px;transform-origin:0 0;transform:scaleX(0.9389);">Review</div>
<div id="t177" style="position:absolute;top:97.15px;font-family:'Liberation Sans', sans-serif;font-size:19.71px;line-height:1;white-space:nowrap;color:#ffffff;font-weight:normal;left:761.80px;transform-origin:0 0;transform:scaleX(0.9513);">View</div>
<div id="t178" style="position:absolute;top:97.15px;font-family:'Liberation Sans', sans-serif;font-size:19.71px;line-height:1;white-space:nowrap;color:#ffffff;font-weight:normal;left:834.00px;transform-origin:0 0;transform:scaleX(1.0259);">Automate</div>
<div id="t179" style="position:absolute;top:97.15px;font-family:'Liberation Sans', sans-serif;font-size:19.71px;line-height:1;white-space:nowrap;color:#ffffff;font-weight:normal;left:950.71px;transform-origin:0 0;transform:scaleX(0.9939);">Help</div>
<div id="t180" style="position:absolute;top:97.10px;font-family:'Liberation Sans', sans-serif;font-size:18.12px;line-height:1;white-space:nowrap;color:#ffffff;font-weight:normal;left:2652.00px;transform-origin:0 0;transform:scaleX(1.0744);">Comments</div>
<div id="t181" style="position:absolute;top:97.10px;font-family:'Liberation Sans', sans-serif;font-size:18.12px;line-height:1;white-space:nowrap;color:#0d0d0d;font-weight:normal;left:2800.00px;transform-origin:0 0;transform:scaleX(0.9740);">Share</div>
<div id="t182" style="position:absolute;top:195.12px;font-family:'Liberation Sans', sans-serif;font-size:17.39px;line-height:1;white-space:nowrap;color:#ffffff;font-weight:normal;left:50.85px;transform-origin:0 0;transform:scaleX(0.9470);">Paste</div>
<div id="t183" style="position:absolute;top:144.09px;font-family:'Liberation Sans', sans-serif;font-size:17.54px;line-height:1;white-space:nowrap;color:#ffffff;font-weight:normal;left:142.20px;transform-origin:0 0;transform:scaleX(0.9784);">Cut</div>
<div id="t184" style="position:absolute;top:182.38px;font-family:'Liberation Sans', sans-serif;font-size:18.26px;line-height:1;white-space:nowrap;color:#ffffff;font-weight:normal;left:142.20px;transform-origin:0 0;transform:scaleX(0.9568);">Copy</div>
<div id="t185" style="position:absolute;top:221.28px;font-family:'Liberation Sans', sans-serif;font-size:18.26px;line-height:1;white-space:nowrap;color:#ffffff;font-weight:normal;left:141.74px;transform-origin:0 0;transform:scaleX(0.9572);">Format Painter</div>
<div id="t186" style="position:absolute;top:253.83px;font-family:'Liberation Sans', sans-serif;font-size:16.67px;line-height:1;white-space:nowrap;color:#ffffff;font-weight:normal;left:109.30px;transform-origin:0 0;transform:scaleX(0.9489);">Clipboard</div>
<div id="t187" style="position:absolute;top:154.86px;font-family:'Liberation Sans', sans-serif;font-size:18.99px;line-height:1;white-space:nowrap;color:#ffffff;font-weight:normal;left:298.30px;transform-origin:0 0;transform:scaleX(0.8464);">Tahoma</div>
<div id="t188" style="position:absolute;top:154.86px;font-family:'Liberation Sans', sans-serif;font-size:18.99px;line-height:1;white-space:nowrap;color:#ffffff;font-weight:normal;left:482.40px;transform-origin:0 0;">8</div>
<div id="t189" style="position:absolute;top:198.83px;font-family:'Liberation Sans', sans-serif;font-size:22.32px;line-height:1;white-space:nowrap;color:#d8d8d8;font-weight:bold;left:306.17px;transform-origin:0 0;transform:scaleX(0.8333);">B</div>
<div id="t190" style="position:absolute;top:253.83px;font-family:'Liberation Sans', sans-serif;font-size:16.67px;line-height:1;white-space:nowrap;color:#ffffff;font-weight:normal;left:429.56px;transform-origin:0 0;transform:scaleX(0.9388);">Font</div>
<div id="t191" style="position:absolute;top:155.79px;font-family:'Liberation Sans', sans-serif;font-size:17.54px;line-height:1;white-space:nowrap;color:#ffffff;font-weight:normal;left:897.30px;transform-origin:0 0;transform:scaleX(0.9879);">Wrap Text</div>
<div id="t192" style="position:absolute;top:203.64px;font-family:'Liberation Sans', sans-serif;font-size:17.25px;line-height:1;white-space:nowrap;color:#ffffff;font-weight:normal;left:896.26px;transform-origin:0 0;transform:scaleX(1.0396);">Merge &amp; Center</div>
<div id="t193" style="position:absolute;top:253.63px;font-family:'Liberation Sans', sans-serif;font-size:16.67px;line-height:1;white-space:nowrap;color:#ffffff;font-weight:normal;left:810.00px;transform-origin:0 0;transform:scaleX(0.9672);">Alignment</div>
<div id="t194" style="position:absolute;top:155.03px;font-family:'Liberation Sans', sans-serif;font-size:18.55px;line-height:1;white-space:nowrap;color:#ffffff;font-weight:normal;left:1099.50px;transform-origin:0 0;transform:scaleX(0.8949);">General</div>
<div id="t195" style="position:absolute;top:199.81px;font-family:'Liberation Sans', sans-serif;font-size:24.93px;line-height:1;white-space:nowrap;color:#d6d6d6;font-weight:normal;left:1113.40px;transform-origin:0 0;transform:scaleX(0.7571) translateX(-50%);">$</div>
<div id="t196" style="position:absolute;top:196.24px;font-family:'Liberation Sans', sans-serif;font-size:31.01px;line-height:1;white-space:nowrap;color:#d6d6d6;font-weight:normal;left:1175.00px;transform-origin:0 0;transform:scaleX(0.8615) translateX(-50%);">%</div>
<div id="t197" style="position:absolute;top:254.03px;font-family:'Liberation Sans', sans-serif;font-size:16.67px;line-height:1;white-space:nowrap;color:#ffffff;font-weight:normal;left:1162.84px;transform-origin:0 0;transform:scaleX(0.9626);">Number</div>
<div id="t198" style="position:absolute;top:194.67px;font-family:'Liberation Sans', sans-serif;font-size:17.68px;line-height:1;white-space:nowrap;color:#ffffff;font-weight:normal;left:1346.91px;transform-origin:0 0;transform:scaleX(0.9887);">Insert</div>
<div id="t199" style="position:absolute;top:194.67px;font-family:'Liberation Sans', sans-serif;font-size:17.68px;line-height:1;white-space:nowrap;color:#ffffff;font-weight:normal;left:1408.01px;transform-origin:0 0;transform:scaleX(0.9949);">Delete</div>
<div id="t200" style="position:absolute;top:192.28px;font-family:'Liberation Sans', sans-serif;font-size:18.26px;line-height:1;white-space:nowrap;color:#ffffff;font-weight:normal;left:1471.61px;transform-origin:0 0;transform:scaleX(0.9942);">Format</div>
<div id="t201" style="position:absolute;top:254.63px;font-family:'Liberation Sans', sans-serif;font-size:16.67px;line-height:1;white-space:nowrap;color:#ffffff;font-weight:normal;left:1418.00px;transform-origin:0 0;transform:scaleX(0.8721);">Cells</div>
<div id="t202" style="position:absolute;top:141.79px;font-family:'Liberation Sans', sans-serif;font-size:23.19px;line-height:1;white-space:nowrap;color:#d8d8d8;font-weight:normal;left:1564.52px;transform-origin:0 0;transform:scaleX(1.3769);">Σ</div>
<div id="t203" style="position:absolute;top:143.36px;font-family:'Liberation Sans', sans-serif;font-size:18.41px;line-height:1;white-space:nowrap;color:#ffffff;font-weight:normal;left:1593.00px;transform-origin:0 0;transform:scaleX(0.9784);">AutoSum</div>
<div id="t204" style="position:absolute;top:182.52px;font-family:'Liberation Sans', sans-serif;font-size:17.39px;line-height:1;white-space:nowrap;color:#ffffff;font-weight:normal;left:1592.73px;transform-origin:0 0;transform:scaleX(0.9688);">Fill</div>
<div id="t205" style="position:absolute;top:220.54px;font-family:'Liberation Sans', sans-serif;font-size:19.13px;line-height:1;white-space:nowrap;color:#ffffff;font-weight:normal;left:1593.70px;transform-origin:0 0;transform:scaleX(0.8272);">Clear</div>
<div id="t206" style="position:absolute;top:192.03px;font-family:'Liberation Sans', sans-serif;font-size:18.55px;line-height:1;white-space:nowrap;color:#ffffff;font-weight:normal;left:1725.80px;transform-origin:0 0;transform:scaleX(0.9763);">Sort &amp;</div>
<div id="t207" style="position:absolute;top:216.23px;font-family:'Liberation Sans', sans-serif;font-size:18.55px;line-height:1;white-space:nowrap;color:#ffffff;font-weight:normal;left:1723.55px;transform-origin:0 0;transform:scaleX(0.9473);">Filter</div>
<div id="t208" style="position:absolute;top:192.03px;font-family:'Liberation Sans', sans-serif;font-size:18.55px;line-height:1;white-space:nowrap;color:#ffffff;font-weight:normal;left:1794.31px;transform-origin:0 0;transform:scaleX(0.9906);">Find &amp;</div>
<div id="t209" style="position:absolute;top:216.23px;font-family:'Liberation Sans', sans-serif;font-size:18.55px;line-height:1;white-space:nowrap;color:#ffffff;font-weight:normal;left:1790.50px;transform-origin:0 0;transform:scaleX(0.8672);">Select</div>
<div id="t210" style="position:absolute;top:255.43px;font-family:'Liberation Sans', sans-serif;font-size:16.67px;line-height:1;white-space:nowrap;color:#ffffff;font-weight:normal;left:1681.54px;transform-origin:0 0;transform:scaleX(0.9604);">Editing</div>
<div id="t211" style="position:absolute;top:192.77px;font-family:'Liberation Sans', sans-serif;font-size:17.68px;line-height:1;white-space:nowrap;color:#ffffff;font-weight:normal;left:1885.00px;transform-origin:0 0;transform:scaleX(1.0319);">Add-ins</div>
<div id="t212" style="position:absolute;top:255.43px;font-family:'Liberation Sans', sans-serif;font-size:16.67px;line-height:1;white-space:nowrap;color:#ffffff;font-weight:normal;left:1888.00px;transform-origin:0 0;transform:scaleX(0.9440);">Add-ins</div>
<div id="t213" style="position:absolute;top:192.77px;font-family:'Liberation Sans', sans-serif;font-size:17.68px;line-height:1;white-space:nowrap;color:#ffffff;font-weight:normal;left:1980.00px;transform-origin:0 0;transform:scaleX(0.9644);">Analyze</div>
<div id="t214" style="position:absolute;top:216.23px;font-family:'Liberation Sans', sans-serif;font-size:18.55px;line-height:1;white-space:nowrap;color:#ffffff;font-weight:normal;left:1991.58px;transform-origin:0 0;transform:scaleX(0.9218);">Data</div>
<div id="t215" style="position:absolute;top:154.88px;font-family:'Liberation Sans', sans-serif;font-size:50.72px;line-height:1;white-space:nowrap;color:#ffffff;font-weight:bold;-webkit-text-stroke:1.2px #fff;left:2292.61px;transform-origin:0 0;transform:scaleX(0.7963);">F</div>
<div id="t216" style="position:absolute;top:154.88px;font-family:'Liberation Sans', sans-serif;font-size:50.72px;line-height:1;white-space:nowrap;color:#ffffff;font-weight:bold;-webkit-text-stroke:1.2px #fff;left:2318.19px;transform-origin:0 0;transform:scaleX(0.9375);">I</div>
<div id="t217" style="position:absolute;top:154.88px;font-family:'Liberation Sans', sans-serif;font-size:50.72px;line-height:1;white-space:nowrap;color:#ffffff;font-weight:bold;-webkit-text-stroke:1.2px #fff;left:2331.50px;transform-origin:0 0;transform:scaleX(0.9677);">N</div>
<div id="t218" style="position:absolute;top:154.88px;font-family:'Liberation Sans', sans-serif;font-size:50.72px;line-height:1;white-space:nowrap;color:#ffffff;font-weight:bold;-webkit-text-stroke:1.2px #fff;left:2367.86px;transform-origin:0 0;transform:scaleX(1.0472);">M</div>
<div id="t219" style="position:absolute;top:154.88px;font-family:'Liberation Sans', sans-serif;font-size:50.72px;line-height:1;white-space:nowrap;color:#ffffff;font-weight:bold;-webkit-text-stroke:1.2px #fff;left:2450.19px;transform-origin:0 0;transform:scaleX(0.9375);">D</div>
<div id="t220" style="position:absolute;top:154.88px;font-family:'Liberation Sans', sans-serif;font-size:50.72px;line-height:1;white-space:nowrap;color:#ffffff;font-weight:bold;-webkit-text-stroke:1.2px #fff;left:2485.71px;transform-origin:0 0;transform:scaleX(0.6966);">E</div>
<div id="t221" style="position:absolute;top:154.88px;font-family:'Liberation Sans', sans-serif;font-size:50.72px;line-height:1;white-space:nowrap;color:#ffffff;font-weight:bold;-webkit-text-stroke:1.2px #fff;left:2511.10px;transform-origin:0 0;transform:scaleX(0.7000);">L</div>
<div id="t222" style="position:absolute;top:154.88px;font-family:'Liberation Sans', sans-serif;font-size:50.72px;line-height:1;white-space:nowrap;color:#ffffff;font-weight:bold;-webkit-text-stroke:1.2px #fff;left:2533.77px;transform-origin:0 0;transform:scaleX(0.8258);">S</div>
<div id="t223" style="position:absolute;top:154.88px;font-family:'Liberation Sans', sans-serif;font-size:50.72px;line-height:1;white-space:nowrap;color:#ffffff;font-weight:bold;-webkit-text-stroke:1.2px #fff;left:2563.36px;transform-origin:0 0;transform:scaleX(0.6815);">L</div>
<div id="t224" style="position:absolute;top:154.88px;font-family:'Liberation Sans', sans-serif;font-size:50.72px;line-height:1;white-space:nowrap;color:#ffffff;font-weight:bold;-webkit-text-stroke:1.2px #fff;left:2585.97px;transform-origin:0 0;transform:scaleX(0.9343);">A</div>
<div id="t225" style="position:absolute;top:154.88px;font-family:'Liberation Sans', sans-serif;font-size:50.72px;line-height:1;white-space:nowrap;color:#ffffff;font-weight:bold;-webkit-text-stroke:1.2px #fff;left:2622.95px;transform-origin:0 0;transform:scaleX(0.7844);">B</div>
<div id="t226" style="position:absolute;top:207.63px;font-family:'Liberation Sans', sans-serif;font-size:34.78px;line-height:1;white-space:nowrap;color:#ffffff;font-weight:normal;-webkit-text-stroke:0.4px #fff;left:2295.00px;transform-origin:0 0;transform:scaleX(1.0810);">T</div>
<div id="t227" style="position:absolute;top:207.63px;font-family:'Liberation Sans', sans-serif;font-size:34.78px;line-height:1;white-space:nowrap;color:#ffffff;font-weight:normal;-webkit-text-stroke:0.4px #fff;left:2336.81px;transform-origin:0 0;transform:scaleX(1.1941);">e</div>
<div id="t228" style="position:absolute;top:207.63px;font-family:'Liberation Sans', sans-serif;font-size:34.78px;line-height:1;white-space:nowrap;color:#ffffff;font-weight:normal;-webkit-text-stroke:0.4px #fff;left:2380.36px;transform-origin:0 0;transform:scaleX(1.1680);">m</div>
<div id="t229" style="position:absolute;top:207.63px;font-family:'Liberation Sans', sans-serif;font-size:34.78px;line-height:1;white-space:nowrap;color:#ffffff;font-weight:normal;-webkit-text-stroke:0.4px #fff;left:2436.26px;transform-origin:0 0;transform:scaleX(1.2188);">p</div>
<div id="t230" style="position:absolute;top:207.63px;font-family:'Liberation Sans', sans-serif;font-size:34.78px;line-height:1;white-space:nowrap;color:#ffffff;font-weight:normal;-webkit-text-stroke:0.4px #fff;left:2482.25px;transform-origin:0 0;transform:scaleX(0.7750);">l</div>
<div id="t231" style="position:absolute;top:207.63px;font-family:'Liberation Sans', sans-serif;font-size:34.78px;line-height:1;white-space:nowrap;color:#ffffff;font-weight:normal;-webkit-text-stroke:0.4px #fff;left:2510.96px;transform-origin:0 0;transform:scaleX(0.9368);">a</div>
<div id="t232" style="position:absolute;top:207.63px;font-family:'Liberation Sans', sans-serif;font-size:34.78px;line-height:1;white-space:nowrap;color:#ffffff;font-weight:normal;-webkit-text-stroke:0.4px #fff;left:2553.80px;transform-origin:0 0;transform:scaleX(1.2100);">t</div>
<div id="t233" style="position:absolute;top:207.63px;font-family:'Liberation Sans', sans-serif;font-size:34.78px;line-height:1;white-space:nowrap;color:#ffffff;font-weight:normal;-webkit-text-stroke:0.4px #fff;left:2588.85px;transform-origin:0 0;transform:scaleX(1.1529);">e</div>
<div id="t234" style="position:absolute;top:207.63px;font-family:'Liberation Sans', sans-serif;font-size:34.78px;line-height:1;white-space:nowrap;color:#ffffff;font-weight:normal;-webkit-text-stroke:0.4px #fff;left:2633.80px;transform-origin:0 0;transform:scaleX(1.0235);">s</div>
<div id="t235" style="position:absolute;top:1684.88px;font-family:'Liberation Sans', sans-serif;font-size:20.72px;line-height:1;white-space:nowrap;color:#ffffff;font-weight:normal;left:189.39px;transform-origin:0 0;transform:scaleX(1.0065);">Contents</div>
<div id="t236" style="position:absolute;top:1684.88px;font-family:'Liberation Sans', sans-serif;font-size:20.72px;line-height:1;white-space:nowrap;color:#0d1420;font-weight:normal;left:362.95px;transform-origin:0 0;transform:scaleX(0.9926) translateX(-50%);">Dashboard</div>
<div id="t237" style="position:absolute;top:1684.88px;font-family:'Liberation Sans', sans-serif;font-size:20.72px;line-height:1;white-space:nowrap;color:#0d1420;font-weight:normal;left:493.10px;transform-origin:0 0;transform:scaleX(0.9409) translateX(-50%);">Revenue</div>
<div id="t238" style="position:absolute;top:1684.88px;font-family:'Liberation Sans', sans-serif;font-size:20.72px;line-height:1;white-space:nowrap;color:#0d1420;font-weight:normal;left:637.80px;transform-origin:0 0;transform:scaleX(0.8945) translateX(-50%);">COGS &amp; OPEX</div>
<div id="t239" style="position:absolute;top:1684.88px;font-family:'Liberation Sans', sans-serif;font-size:20.72px;line-height:1;white-space:nowrap;color:#0d1420;font-weight:normal;left:774.55px;transform-origin:0 0;transform:scaleX(0.9574) translateX(-50%);">Payroll</div>
<div id="t240" style="position:absolute;top:1684.88px;font-family:'Liberation Sans', sans-serif;font-size:20.72px;line-height:1;white-space:nowrap;color:#0d1420;font-weight:normal;left:875.20px;transform-origin:0 0;transform:scaleX(0.8268) translateX(-50%);">CAPEX</div>
<div id="t241" style="position:absolute;top:1684.88px;font-family:'Liberation Sans', sans-serif;font-size:20.72px;line-height:1;white-space:nowrap;color:#0d1420;font-weight:normal;left:988.40px;transform-origin:0 0;transform:scaleX(0.9696) translateX(-50%);">CapTable</div>
<div id="t242" style="position:absolute;top:1684.88px;font-family:'Liberation Sans', sans-serif;font-size:20.72px;line-height:1;white-space:nowrap;color:#0d1420;font-weight:normal;left:1103.00px;transform-origin:0 0;transform:scaleX(0.9699) translateX(-50%);">Capital</div>
<div id="t243" style="position:absolute;top:1684.88px;font-family:'Liberation Sans', sans-serif;font-size:20.72px;line-height:1;white-space:nowrap;color:#0d1420;font-weight:normal;left:1182.00px;transform-origin:0 0;transform:scaleX(0.9124) translateX(-50%);">IS</div>
<div id="t244" style="position:absolute;top:1684.88px;font-family:'Liberation Sans', sans-serif;font-size:20.72px;line-height:1;white-space:nowrap;color:#0d1420;font-weight:normal;left:1240.05px;transform-origin:0 0;transform:scaleX(0.8589) translateX(-50%);">CF</div>
<div id="t245" style="position:absolute;top:1684.88px;font-family:'Liberation Sans', sans-serif;font-size:20.72px;line-height:1;white-space:nowrap;color:#0d1420;font-weight:normal;left:1300.95px;transform-origin:0 0;transform:scaleX(0.8637) translateX(-50%);">BS</div>
<div id="t246" style="position:absolute;top:1684.88px;font-family:'Liberation Sans', sans-serif;font-size:20.72px;line-height:1;white-space:nowrap;color:#0d1420;font-weight:normal;left:1395.25px;transform-origin:0 0;transform:scaleX(0.9317) translateX(-50%);">Scenarios</div>
<div id="t247" style="position:absolute;top:1684.88px;font-family:'Liberation Sans', sans-serif;font-size:20.72px;line-height:1;white-space:nowrap;color:#0d1420;font-weight:normal;left:1523.20px;transform-origin:0 0;transform:scaleX(1.0126) translateX(-50%);">Valuation</div>
<div id="t248" style="position:absolute;top:1684.88px;font-family:'Liberation Sans', sans-serif;font-size:20.72px;line-height:1;white-space:nowrap;color:#0d1420;font-weight:normal;left:1650.95px;transform-origin:0 0;transform:scaleX(0.9576) translateX(-50%);">Summary</div>
<div id="t249" style="position:absolute;top:1684.88px;font-family:'Liberation Sans', sans-serif;font-size:20.72px;line-height:1;white-space:nowrap;color:#0d1420;font-weight:normal;left:1744.95px;transform-origin:0 0;transform:scaleX(0.7940) translateX(-50%);">BE</div>
<div id="t250" style="position:absolute;top:1680.01px;font-family:'Liberation Sans', sans-serif;font-size:20.58px;line-height:1;white-space:nowrap;color:#111;font-weight:normal;left:1818.15px;transform-origin:0 0;transform:scaleX(0.9158) translateX(-50%);">ROIC</div>
<div id="t251" style="position:absolute;top:1684.88px;font-family:'Liberation Sans', sans-serif;font-size:20.72px;line-height:1;white-space:nowrap;color:#0d1420;font-weight:normal;left:1909.50px;transform-origin:0 0;transform:scaleX(0.9285) translateX(-50%);">Charts</div>
<div id="t252" style="position:absolute;top:1684.88px;font-family:'Liberation Sans', sans-serif;font-size:20.72px;line-height:1;white-space:nowrap;color:#0d1420;font-weight:normal;left:1997.00px;transform-origin:0 0;transform:scaleX(0.8256) translateX(-50%);">KPIs</div>
<div id="t253" style="position:absolute;top:1684.88px;font-family:'Liberation Sans', sans-serif;font-size:20.72px;line-height:1;white-space:nowrap;color:#111111;font-weight:normal;left:2046.00px;transform-origin:0 0;">Sc</div>
<div id="t254" style="position:absolute;top:1727.72px;font-family:'Liberation Sans', sans-serif;font-size:15.51px;line-height:1;white-space:nowrap;color:#e8e8e8;font-weight:normal;left:26.34px;transform-origin:0 0;transform:scaleX(0.9579);">Ready</div>
<div id="t255" style="position:absolute;top:1727.72px;font-family:'Liberation Sans', sans-serif;font-size:15.51px;line-height:1;white-space:nowrap;color:#ffffff;font-weight:bold;left:173.40px;transform-origin:0 0;transform:scaleX(1.0103);">Accessibility: Investigate</div>
<div id="t256" style="position:absolute;top:1727.74px;font-family:'Liberation Sans', sans-serif;font-size:15.36px;line-height:1;white-space:nowrap;color:#e8e8e8;font-weight:normal;left:2839.52px;transform-origin:0 0;transform:scaleX(0.9838);">120%</div>
</body></html>
